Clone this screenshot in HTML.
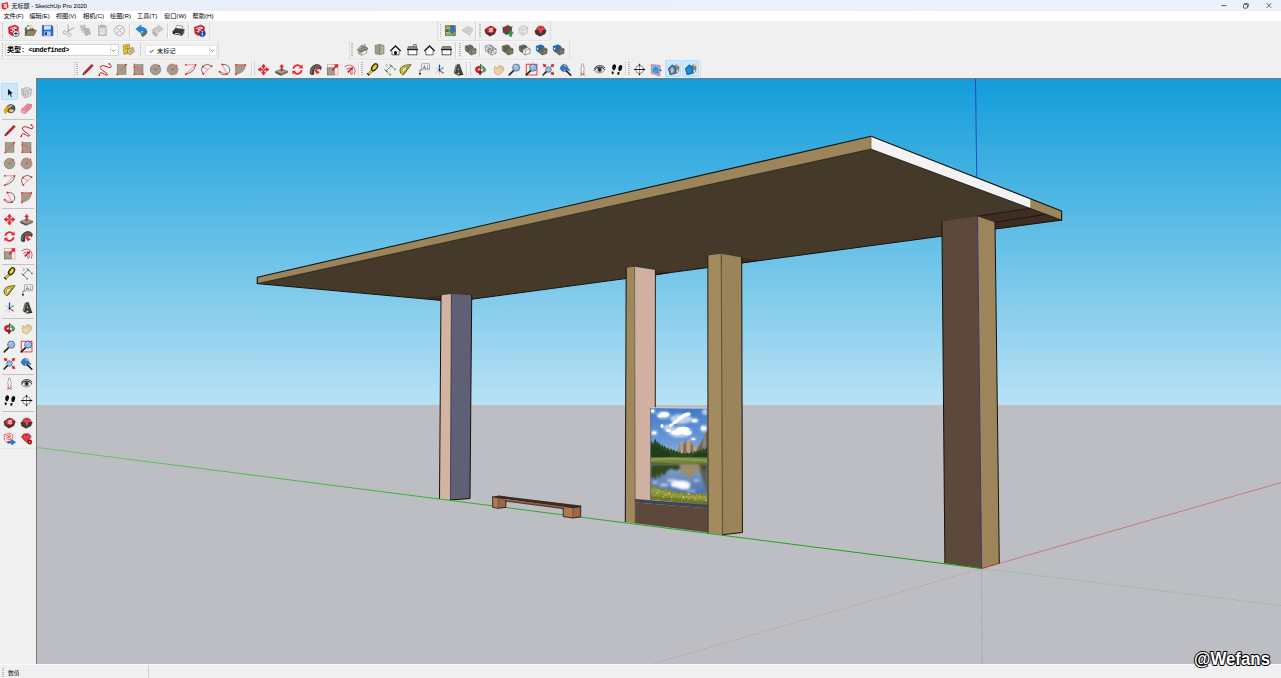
<!DOCTYPE html>
<html lang="zh-CN"><head><meta charset="utf-8"><title>无标题 - SketchUp Pro 2020</title>
<style>
html,body{margin:0;padding:0;}
body{width:1281px;height:678px;overflow:hidden;position:relative;background:#f0f0f0;font-family:"Liberation Sans","Noto Sans CJK SC",sans-serif;color:#000;}
#title{position:absolute;left:0;top:0;width:1281px;height:11px;background:linear-gradient(90deg,#e8eff8,#ecf2fa);}
#title .t{position:absolute;left:11.6px;top:2px;font-size:6px;line-height:8px;white-space:nowrap;color:#000;}
#menu{position:absolute;left:0;top:11px;width:1281px;height:9.5px;background:#fff;}
#menu span{position:absolute;top:1.1px;font-size:6.2px;line-height:8px;white-space:nowrap;color:#000;}
#tb{position:absolute;left:0;top:20.5px;width:1281px;height:57.5px;background:#f0f0f0;}
.ic{position:absolute;overflow:visible;}
.vsep{position:absolute;width:1px;background:#d4d4d4;box-shadow:1px 0 0 #fafafa;}
.hsep{position:absolute;height:1px;background:#c2c2c2;}
.hdl{position:absolute;width:1.5px;background-image:linear-gradient(#b8b8b8 50%,transparent 50%);background-size:1.5px 2px;}
.hl{position:absolute;background:#cce8ff;border:0.5px solid #b5dcfb;box-sizing:border-box;border-radius:1px;}
.combo{position:absolute;background:#fff;border:0.5px solid #d5d5d5;box-sizing:border-box;}
.combo.c2{border-color:#e6e6e6;}
.combo .cbt{position:absolute;left:2px;top:1.2px;font-size:6.2px;line-height:8px;white-space:nowrap;}
.combo .cbt.b{font-weight:bold;font-size:7px;left:1.1px;top:1.3px;}
.combo .mono{font-family:"Liberation Mono",monospace;font-size:6.7px;font-weight:bold;letter-spacing:-0.33px;}
.cdv{position:absolute;right:7.6px;top:0;width:0.5px;height:100%;background:#e2e2e2;}
.combo .arr{position:absolute;right:1.6px;top:3.9px;}
.tbline{position:absolute;background:#e3e3e3;height:1px;box-shadow:0 1px 0 #f8f8f8;}
.tbv{position:absolute;background:#dedede;width:1px;}
#vp{position:absolute;left:35.5px;top:78.2px;width:1246px;height:585.6px;background:#7a7a7a;overflow:hidden;}
#vp svg{position:absolute;left:1.1px;top:0.7px;}
#lt{position:absolute;left:0;top:78px;width:36px;height:586px;background:#f0f0f0;}
#status{position:absolute;left:0;top:664px;width:1281px;height:14px;background:#f0f0f0;border-top:1px solid #fafafa;box-sizing:border-box;}
#status .v{position:absolute;left:8px;top:4px;font-size:5.8px;line-height:8px;color:#111;white-space:nowrap;}
#wm{position:absolute;left:1190px;top:645px;width:84px;height:24px;}
.wc{position:absolute;top:2.8px;}
</style></head><body>
<div id="title"><svg style="position:absolute;left:1px;top:1.5px" width="8" height="8" viewBox="0 0 8 8"><path d="M0.5,1.2 L6.8,0.3 L7.6,5.6 L3.2,7.7 L0.8,6.4 Z" fill="#e02b2b"/><path d="M2.2,2.6 L5.4,2 L5.5,3.4 L3.2,3.9 L5.7,4.5 L5.6,5.6 L2.6,5" fill="none" stroke="#fff" stroke-width="0.8"/></svg><span class="t">无标题 - SketchUp Pro 2020</span>
<svg class="wc" style="left:1220.5px" width="6" height="6" viewBox="0 0 6 6"><path d="M0.3,2.6 H5.4" stroke="#222" stroke-width="0.7"/></svg>
<svg class="wc" style="left:1243px" width="6" height="6" viewBox="0 0 6 6"><rect x="0.5" y="1.3" width="3.9" height="3.9" rx="0.8" fill="none" stroke="#222" stroke-width="0.7"/><path d="M1.6,1.2 V0.9 Q1.6,0.4 2.2,0.4 H4.6 Q5.3,0.4 5.3,1 V3.5 Q5.3,4.1 4.7,4.1" fill="none" stroke="#222" stroke-width="0.7"/></svg>
<svg class="wc" style="left:1266px" width="6" height="6" viewBox="0 0 6 6"><path d="M0.6,0.2 L5.2,4.8 M5.2,0.2 L0.6,4.8" stroke="#222" stroke-width="0.7"/></svg>
</div>
<div id="menu"><span style="left:3.4px">文件(F)</span><span style="left:29.2px">编辑(E)</span><span style="left:55.8px">视图(V)</span><span style="left:83px">相机(C)</span><span style="left:110px">绘图(R)</span><span style="left:137px">工具(T)</span><span style="left:164px">窗口(W)</span><span style="left:192.6px">帮助(H)</span></div>
<div id="tb"></div>
<div class="tbline" style="left:0;top:40px;width:209px"></div><div class="tbv" style="left:208.6px;top:21px;height:19px"></div><div class="tbline" style="left:437px;top:40px;width:113px"></div><div class="tbv" style="left:437px;top:21px;height:19px"></div><div class="tbv" style="left:550px;top:21px;height:19px"></div><div class="tbv" style="left:349px;top:41px;height:18px"></div><div class="tbv" style="left:568.5px;top:41px;height:18px"></div><div class="tbv" style="left:217.5px;top:41px;height:18px"></div><div class="tbv" style="left:74px;top:60px;height:18px"></div><div class="tbv" style="left:699.5px;top:60px;height:18px"></div>
<div class="tbline" style="left:0;top:59px;width:218px"></div><div class="tbline" style="left:349px;top:59px;width:220px"></div>
<div id="lt"><div style="position:absolute;left:0;top:370px;width:35.5px;height:1px;background:#e4e4e4"></div></div>
<div id="vp"><svg width="1244" height="585" viewBox="37 79 1244 585" shape-rendering="geometricPrecision"><defs><linearGradient id="sky" x1="0" y1="79" x2="0" y2="405" gradientUnits="userSpaceOnUse"><stop offset="0" stop-color="#129dda"/><stop offset="1" stop-color="#b9e2f4"/></linearGradient></defs><rect x="37" y="79" width="1244" height="326" fill="url(#sky)"/><rect x="37" y="405" width="1244" height="260" fill="#bdbec3"/><line x1="981.7" y1="568.5" x2="654" y2="663.5" stroke="#c86464" stroke-width="0.8" stroke-linecap="round" stroke-dasharray="0.1 2.1" opacity="0.7"/><line x1="981.7" y1="568.5" x2="1281" y2="605.6" stroke="#3aa83a" stroke-width="0.8" stroke-linecap="round" stroke-dasharray="0.1 2.1" opacity="0.6"/><line x1="981.7" y1="568.5" x2="981.8" y2="664" stroke="#6464d0" stroke-width="0.8" stroke-linecap="round" stroke-dasharray="0.1 2.1" opacity="0.7"/><line x1="981.7" y1="568.5" x2="1281" y2="482.6" stroke="#cc5a5a" stroke-width="0.8" stroke-linecap="round" opacity="0.85"/><line x1="976.75" y1="176.5" x2="975.5" y2="79" stroke="#2a3cc8" stroke-width="0.9" stroke-linecap="round" /><polygon points="257.3,283.6 871,149.1 1061.6,220.1 454,301.6" fill="#45392a" /><polygon points="977.5,216.2 1030.5,208.3 1061.6,220.1 995,229 995,222.3" fill="#3f2c22" /><polygon points="655.4,269.9 671.5,272.7 655.4,275.5" fill="#3f2c22" /><polygon points="741.7,257.7 760.5,260.5 741.7,263.5" fill="#3f2c22" /><polygon points="441.2,295.5 423.5,298.2 441.2,300.6" fill="#3f2c22" /><polygon points="257.3,277.3 871,136.3 871,149.1 257.3,283.6" fill="#9d855b" /><polygon points="871,136.3 1030.5,198.9 1030.5,208.2 871,149.1" fill="#f3f3f3" /><polygon points="1030.5,198.9 1061.6,210.9 1061.6,220.1 1030.5,208.2" fill="#9d855b" /><polyline points="257.3,283.6 257.3,277.3 871,136.3 1061.6,210.9 1061.6,220.1" fill="none" stroke="#17110a" stroke-width="1.1" stroke-linejoin="round" stroke-linecap="round" /><polyline points="257.3,283.6 454,301.6 1061.6,220.1" fill="none" stroke="#17110a" stroke-width="1.0" stroke-linejoin="round" stroke-linecap="round" /><line x1="257.3" y1="283.6" x2="871" y2="149.1" stroke="#17110a" stroke-width="0.7" stroke-linecap="round" /><line x1="871" y1="149.1" x2="1061.6" y2="220.1" stroke="#17110a" stroke-width="0.7" stroke-linecap="round" /><line x1="871" y1="136.3" x2="871" y2="149.1" stroke="#6a5a3c" stroke-width="0.7" stroke-linecap="round" /><line x1="995" y1="222.3" x2="1046" y2="214.4" stroke="#17110a" stroke-width="0.8" stroke-linecap="round" /><line x1="977.5" y1="216.2" x2="1030.5" y2="208.3" stroke="#17110a" stroke-width="0.8" stroke-linecap="round" /><polygon points="441,295.3 451.4,293.9 450.4,500 439.5,498.7" fill="#d3b4a3" /><polygon points="451.4,293.9 471.7,295.3 470,498.5 450.4,500" fill="#5f6076" /><polyline points="441,295.3 439.5,498.7" fill="none" stroke="#17110a" stroke-width="1" stroke-linejoin="round" stroke-linecap="round" /><polyline points="471.7,295.3 470,498.5 450.4,500" fill="none" stroke="#17110a" stroke-width="1" stroke-linejoin="round" stroke-linecap="round" /><line x1="451.4" y1="293.9" x2="450.4" y2="500" stroke="#2a2a36" stroke-width="0.7" stroke-linecap="round" /><polygon points="626.2,267.8 634.6,266.7 635.2,523.3 625.3,522" fill="#a0885d" /><polygon points="634.6,266.7 655.4,269.9 655.3,526 635.2,523.3" fill="#d0b1a1" /><polyline points="626.2,267.8 625.3,522" fill="none" stroke="#17110a" stroke-width="1" stroke-linejoin="round" stroke-linecap="round" /><line x1="655.4" y1="269.9" x2="655.3" y2="408" stroke="#17110a" stroke-width="0.9" stroke-linecap="round" /><line x1="634.6" y1="266.7" x2="635.2" y2="523.3" stroke="#5c4c30" stroke-width="0.7" stroke-linecap="round" /><clipPath id="pc"><polygon points="650.6,407.9 707.5,408.5 707.5,504.6 650.6,499.6"/></clipPath><linearGradient id="psky" x1="0" y1="0" x2="0" y2="1"><stop offset="0" stop-color="#3f7ac8"/><stop offset="0.6" stop-color="#6a9ad8"/><stop offset="1" stop-color="#a8c6e6"/></linearGradient><linearGradient id="plake" x1="0" y1="0" x2="0" y2="1"><stop offset="0" stop-color="#8aa4c8"/><stop offset="0.45" stop-color="#5f84ba"/><stop offset="1" stop-color="#3a62a2"/></linearGradient><filter id="pb" x="-30%" y="-30%" width="160%" height="160%"><feGaussianBlur stdDeviation="0.9"/></filter><filter id="pb2" x="-20%" y="-20%" width="140%" height="140%"><feGaussianBlur stdDeviation="0.45"/></filter><filter id="pb3" x="-30%" y="-30%" width="160%" height="160%"><feGaussianBlur stdDeviation="1.3"/></filter><g clip-path="url(#pc)"><rect x="650.6" y="407.9" width="56.89999999999998" height="56" fill="url(#psky)"/><g fill="#dfe9f6" opacity="0.75" filter="url(#pb3)"><ellipse cx="663.5" cy="415" rx="7" ry="4"/><ellipse cx="681" cy="419" rx="11" ry="5"/><ellipse cx="680" cy="432" rx="12" ry="5.5"/><ellipse cx="668" cy="428" rx="5" ry="3.5"/><ellipse cx="654" cy="433" rx="3.5" ry="2.4"/><ellipse cx="694.5" cy="420.5" rx="4" ry="2.6"/><ellipse cx="704" cy="428.5" rx="4" ry="3.6"/><ellipse cx="652.5" cy="411" rx="3" ry="2.5"/><ellipse cx="705" cy="412" rx="3" ry="3"/><ellipse cx="693" cy="439" rx="3" ry="1.6"/></g><g fill="#fff" filter="url(#pb2)"><ellipse cx="664.5" cy="414.6" rx="4.6" ry="2.4" transform="rotate(0 664.5 414.6)"/><ellipse cx="660" cy="416" rx="2.5" ry="1.5" transform="rotate(0 660 416)"/><ellipse cx="686.5" cy="414.6" rx="4.2" ry="2" transform="rotate(-12 686.5 414.6)"/><ellipse cx="681" cy="417.8" rx="4.6" ry="2" transform="rotate(-30 681 417.8)"/><ellipse cx="676" cy="421.6" rx="4" ry="1.8" transform="rotate(-30 676 421.6)"/><ellipse cx="671.5" cy="425" rx="2.6" ry="1.6" transform="rotate(-20 671.5 425)"/><ellipse cx="683" cy="429.6" rx="6.5" ry="2.8" transform="rotate(0 683 429.6)"/><ellipse cx="677" cy="432.5" rx="6" ry="2.6" transform="rotate(0 677 432.5)"/><ellipse cx="687" cy="433" rx="4.5" ry="2.2" transform="rotate(0 687 433)"/><ellipse cx="668.5" cy="430.5" rx="2.6" ry="1.5" transform="rotate(0 668.5 430.5)"/><ellipse cx="662" cy="426" rx="1.6" ry="2" transform="rotate(0 662 426)"/><ellipse cx="654.2" cy="432.8" rx="2.2" ry="1.4" transform="rotate(0 654.2 432.8)"/><ellipse cx="694.5" cy="420.4" rx="2.8" ry="1.5" transform="rotate(0 694.5 420.4)"/><ellipse cx="703.5" cy="428.2" rx="2.4" ry="2" transform="rotate(0 703.5 428.2)"/><ellipse cx="652.2" cy="411" rx="2" ry="1.6" transform="rotate(0 652.2 411)"/><ellipse cx="693.5" cy="439.2" rx="2" ry="0.9" transform="rotate(0 693.5 439.2)"/></g><g filter="url(#pb2)"><path d="M662,452 L668,447 L672,449 L677,451.5 L679,447 L680.3,442.5 L681.4,440.6 L682.6,442.5 L683.6,444.5 L685.2,442 L687,440 L688.8,439.2 L690.4,441 L691.6,443.5 L694,445 L696.8,446.8 L698.4,446.4 L701,442.5 L703.4,437.5 L705.6,433 L707.6,430 L707.6,460 L662,460 Z" fill="#948570"/><path d="M681.4,440.6 L682.6,442.5 L683,453 L680.6,453 L680.3,442.5 Z M687,440 L688.8,439.2 L690.4,441 L690,453 L686.4,453 Z M694,445 L696.8,446.8 L696,454 L693,454 Z" fill="#bba285"/><path d="M683.6,444.5 L685.2,442 L686.4,453 L683.4,453 Z M691.6,443.5 L693,454 L690.4,454 Z" fill="#74695a"/><path d="M698.4,446.4 L701,442.5 L703.4,437.5 L705.6,433 L707.6,430 L707.6,460 L697,460 Z" fill="#6b695c"/><path d="M703.4,437.5 L705.6,433 L706.4,445 L704,452 L702.4,446 Z" fill="#8a8674"/><path d="M662,452 L668,447 L672,449 L677,451.5 L678,456 L662,456 Z" fill="#8a9490" opacity="0.85"/><path d="M650.6,443 L651.6,440.5 L652.6,444 L653.8,441.8 L655.4,438.4 L656.8,443 L657.8,441 L658.8,444.5 L659.8,442.6 L661,446.5 L662.4,444 L663.6,447.6 L665,445.4 L666.4,449 L668,447.4 L669.4,450.4 L671,448.6 L672.4,451 L674,449.4 L675.6,452 L677,450.4 L678.6,453 L680,451.6 L681.6,454 L683,452.4 L685,454 L687,452.2 L689,454 L691,451.8 L693,453.4 L694.6,450.6 L696,452.4 L697.6,449.4 L699,451.6 L700.6,448.4 L702,451 L703.6,448 L705,450 L706.4,447 L707.6,449 L707.6,461 L650.6,461 Z" fill="#2c4824"/><path d="M650.6,446 L653,444.6 L656,446.6 L659,446 L662,449.4 L666,451 L670,453 L670,459 L650.6,459 Z" fill="#1f381a" opacity="0.75"/><path d="M694,455 L698,452.6 L702,454 L707.6,452 L707.6,459 L694,459 Z" fill="#203a1a" opacity="0.7"/><rect x="650.6" y="457.3" width="56.89999999999998" height="7" fill="#738540"/><path d="M650.6,458.6 L670,457.6 L690,458.6 L707.6,459.4 L707.6,461.4 L690,460.4 L670,459.8 L650.6,461 Z" fill="#8fa050" opacity="0.85"/><path d="M650.6,462 L660,462.6 L672,463.8 L690,464.2 L707.6,463.2 L707.6,465.4 L650.6,465.4 Z" fill="#66623a" opacity="0.8"/></g><rect x="650.6" y="464.6" width="56.89999999999998" height="42" fill="url(#plake)"/><g filter="url(#pb)"><path d="M650.6,464.6 L707.6,464.6 L707.6,470 L700,471.5 L694,469.5 L687,470 L681,468.6 L676,470.5 L671,468.6 L666.5,471.5 L664,476.5 L661.6,472.4 L659.6,479.4 L657.4,474 L655.4,481 L653.4,476.4 L650.6,479 Z" fill="#33471e"/><path d="M679.6,465 L698,465 L702,468.6 L699,471.6 L696,470.6 L693.6,474.6 L691,477.6 L689.2,479 L687.6,475.4 L685.6,472.6 L684,474 L682.6,476.6 L681.4,472 L680.4,468.6 Z" fill="#a08c68"/><path d="M699.6,468 L707.6,467 L707.6,494 L705.4,488 L703.4,481 L701.4,475 Z" fill="#5a5644" opacity="0.9"/><ellipse cx="680.5" cy="484.4" rx="10" ry="3.8" fill="#fff" opacity="0.95"/><ellipse cx="684" cy="487" rx="6" ry="2.4" fill="#fff" opacity="0.95"/><ellipse cx="672" cy="480.6" rx="5.4" ry="1.7" fill="#fff" opacity="0.6"/><ellipse cx="664" cy="484.8" rx="4.4" ry="1.6" fill="#fff" opacity="0.6"/><ellipse cx="696.5" cy="480.4" rx="3" ry="1.2" fill="#fff" opacity="0.55"/><ellipse cx="655" cy="482.6" rx="2.6" ry="1.4" fill="#fff" opacity="0.5"/><ellipse cx="691" cy="491" rx="5" ry="1.5" fill="#fff" opacity="0.35"/></g><path d="M650.6,486 L660,487.8 L670,490.2 L682.8,492.8 L695,493.6 L707.6,493.8 L707.6,506 L650.6,506 Z" fill="#7f8a30" filter="url(#pb2)"/><path d="M650.6,488.6 L660,490.4 L672,493 L686,495.4 L700,496 L707.6,496 L707.6,499.5 L690,498.6 L672,496.4 L650.6,492.5 Z" fill="#9ea040" opacity="0.7" filter="url(#pb2)"/><g fill="#eef0d4" opacity="0.85"><circle cx="669.1" cy="492.6" r="0.51"/><circle cx="655.1" cy="495.2" r="0.42"/><circle cx="654.2" cy="494.8" r="0.31"/><circle cx="675.3" cy="492.9" r="0.33"/><circle cx="674.8" cy="499.7" r="0.34"/><circle cx="663.5" cy="497.1" r="0.60"/><circle cx="683.3" cy="496.8" r="0.61"/><circle cx="653.6" cy="499.4" r="0.39"/><circle cx="659.1" cy="490.5" r="0.40"/><circle cx="696.7" cy="495.2" r="0.49"/><circle cx="686.8" cy="496.6" r="0.48"/><circle cx="654.5" cy="488.9" r="0.37"/><circle cx="689.1" cy="497.0" r="0.40"/><circle cx="683.8" cy="497.2" r="0.40"/><circle cx="695.5" cy="499.0" r="0.38"/><circle cx="683.2" cy="497.7" r="0.58"/><circle cx="691.8" cy="496.0" r="0.61"/><circle cx="657.6" cy="494.0" r="0.54"/><circle cx="659.5" cy="495.1" r="0.31"/><circle cx="688.4" cy="499.5" r="0.48"/><circle cx="700.0" cy="496.2" r="0.52"/><circle cx="684.3" cy="498.1" r="0.45"/><circle cx="698.0" cy="500.9" r="0.45"/><circle cx="688.2" cy="494.3" r="0.52"/><circle cx="687.2" cy="501.2" r="0.56"/><circle cx="666.9" cy="494.7" r="0.51"/><circle cx="652.3" cy="494.0" r="0.35"/><circle cx="657.6" cy="489.5" r="0.55"/><circle cx="658.2" cy="491.9" r="0.43"/><circle cx="699.8" cy="494.4" r="0.44"/><circle cx="681.8" cy="500.4" r="0.56"/><circle cx="699.4" cy="495.9" r="0.43"/><circle cx="671.1" cy="500.2" r="0.61"/><circle cx="659.5" cy="491.2" r="0.37"/><circle cx="664.1" cy="495.5" r="0.49"/><circle cx="665.7" cy="490.4" r="0.43"/><circle cx="671.7" cy="497.1" r="0.60"/><circle cx="689.7" cy="497.7" r="0.50"/><circle cx="688.9" cy="494.2" r="0.59"/><circle cx="694.7" cy="500.4" r="0.56"/><circle cx="673.0" cy="495.6" r="0.33"/><circle cx="686.5" cy="494.3" r="0.32"/><circle cx="662.7" cy="491.6" r="0.41"/><circle cx="653.9" cy="488.0" r="0.35"/><circle cx="656.7" cy="493.2" r="0.31"/><circle cx="700.0" cy="498.4" r="0.35"/><circle cx="665.1" cy="494.1" r="0.42"/><circle cx="657.9" cy="499.4" r="0.62"/><circle cx="677.1" cy="496.8" r="0.33"/><circle cx="656.7" cy="492.9" r="0.38"/><circle cx="697.4" cy="495.0" r="0.31"/><circle cx="704.3" cy="497.8" r="0.35"/><circle cx="681.4" cy="493.7" r="0.47"/><circle cx="705.8" cy="500.3" r="0.52"/><circle cx="665.6" cy="494.3" r="0.35"/><circle cx="694.2" cy="497.8" r="0.55"/><circle cx="669.5" cy="493.4" r="0.56"/><circle cx="706.2" cy="500.2" r="0.56"/><circle cx="696.8" cy="499.3" r="0.37"/><circle cx="680.0" cy="496.1" r="0.31"/></g><path d="M650.6,496.6 L707.6,501.4 L707.6,506 L650.6,506 Z" fill="#55621f" opacity="0.5"/></g><line x1="650.6" y1="407.59999999999997" x2="707.5" y2="408.2" stroke="#c8c8c8" stroke-width="0.9"/><line x1="650.6" y1="407.9" x2="650.6" y2="499.6" stroke="#3a4660" stroke-width="0.6"/><polygon points="635.2,499.4 707.7,505 707.7,508.2 635.2,502.6" fill="#3c4656" /><polygon points="635.2,502.6 707.7,508.2 707.7,532.6 635.2,523.3" fill="#5d493b" /><line x1="635.2" y1="499.4" x2="707.7" y2="505" stroke="#222a36" stroke-width="0.6" stroke-linecap="round" /><polygon points="707.8,255.6 721.2,253.7 722.5,534.7 708,532.9" fill="#a48b5f" /><polygon points="721.2,253.7 741.7,257.6 742.4,532.5 722.5,534.7" fill="#9b8459" /><polyline points="707.8,255.6 708,532.9" fill="none" stroke="#17110a" stroke-width="0.9" stroke-linejoin="round" stroke-linecap="round" /><polyline points="741.7,257.6 742.4,532.5 722.5,534.7" fill="none" stroke="#17110a" stroke-width="1" stroke-linejoin="round" stroke-linecap="round" /><line x1="721.2" y1="253.7" x2="722.5" y2="534.7" stroke="#4a3c22" stroke-width="0.8" stroke-linecap="round" /><polygon points="941.9,221.5 977.5,216.2 981.6,568.5 944.9,563.2" fill="#5d493b" /><polygon points="977.5,216.2 995,222.5 999.3,563.2 981.6,568.5" fill="#9d855b" /><polyline points="941.9,221.5 944.9,563.2" fill="none" stroke="#17110a" stroke-width="1" stroke-linejoin="round" stroke-linecap="round" /><polyline points="995,222.5 999.3,563.2" fill="none" stroke="#17110a" stroke-width="1" stroke-linejoin="round" stroke-linecap="round" /><line x1="977.5" y1="216.2" x2="981.6" y2="568.5" stroke="#3a2c6a" stroke-width="0.9" stroke-linecap="round" /><line x1="981.6" y1="568.5" x2="999.3" y2="563.2" stroke="#c03030" stroke-width="1" stroke-linecap="round" /><linearGradient id="gax" x1="37" y1="0" x2="982" y2="0" gradientUnits="userSpaceOnUse"><stop offset="0" stop-color="#58c458" stop-opacity="0.85"/><stop offset="0.45" stop-color="#2aab2a"/><stop offset="1" stop-color="#0f9a0f"/></linearGradient><line x1="37" y1="447.5" x2="981.7" y2="568.5" stroke="url(#gax)" stroke-width="0.95" stroke-linecap="round" /><polygon points="492.7,497.2 498.3,498 498.3,508.3 492.7,507.3" fill="#b07852" /><polygon points="498.3,498 505.8,497.6 505.8,507.4 498.3,508.3" fill="#9b6745" /><polygon points="563.2,506.5 572.8,507.8 572.8,518 563.2,516.6" fill="#b07852" /><polygon points="572.8,507.8 580.7,507 580.7,516.9 572.8,518" fill="#9b6745" /><polygon points="492.7,496.6 499,495.6 580.7,505.6 580.7,507.4 572.8,508.2 498.3,498.3 492.7,497.6" fill="#3b2a20" /><polygon points="505.8,499.2 563.2,506.6 563.2,508.6 505.8,501" fill="#8c5c3e" /><polyline points="492.7,496.6 492.7,507.3 498.3,508.3 505.8,507.4 505.8,500.6" fill="none" stroke="#17110a" stroke-width="0.8" stroke-linejoin="round" stroke-linecap="round" /><polyline points="563.2,508 563.2,516.6 572.8,518 580.7,516.9 580.7,505.6" fill="none" stroke="#17110a" stroke-width="0.8" stroke-linejoin="round" stroke-linecap="round" /><line x1="505.8" y1="501.2" x2="563.2" y2="508.6" stroke="#17110a" stroke-width="0.7" stroke-linecap="round" /><line x1="498.3" y1="498.6" x2="498.3" y2="508.3" stroke="#5a3a24" stroke-width="0.6" stroke-linecap="round" /><line x1="572.8" y1="508.4" x2="572.8" y2="518" stroke="#5a3a24" stroke-width="0.6" stroke-linecap="round" /></svg></div>
<div class="hdl" style="left:1.9px;top:23.0px;height:15.5px"></div><svg class="ic" style="left:5.9px;top:23.0px" width="15" height="15" viewBox="0 0 16 16"><path d="M2.6,4.4 L9.6,2 L13.4,4.2 L12.6,10.6 L6.6,13.6 L3,11 Z" fill="#d8202c" stroke="#7a1016" stroke-width="0.4"/><path d="M4.6,6 L9.8,4.4 L11.4,5.4 L6.4,7.2 L11,8.6 L10.6,10.4 L5,9" fill="none" stroke="#fff" stroke-width="1"/><circle cx="10.6" cy="11.2" r="3.3" fill="#fff" stroke="#222" stroke-width="0.7"/><path d="M10.6,9.2 V13.2 M8.6,11.2 H12.6" stroke="#111" stroke-width="0.9"/></svg><svg class="ic" style="left:23.1px;top:23.0px" width="15" height="15" viewBox="0 0 16 16"><path d="M2.4,13.2 V5 H6 L7,6.2 H11.6 V8" fill="#6c6a52" stroke="#33321f" stroke-width="0.5"/><path d="M2.4,13.2 L5,7.8 H14.4 L11.6,13.2 Z" fill="#8e8a68" stroke="#33321f" stroke-width="0.5"/><path d="M4.2,6.8 V3.4 L9.6,2.8 V6.4" fill="#fff" stroke="#888" stroke-width="0.4"/><path d="M4.6,2 L7.4,3.2 L4.6,4.6 Z" fill="#20a030"/><path d="M6.4,5.6 L8.8,4.6 L8.8,6.4 Z" fill="#d8202c"/></svg><svg class="ic" style="left:39.8px;top:23.0px" width="15" height="15" viewBox="0 0 16 16"><path d="M2.4,2.6 H12.4 L13.8,4 V13.6 H2.4 Z" fill="#1c6fd4" stroke="#0c3a80" stroke-width="0.5"/><rect x="4.4" y="2.8" width="7" height="4.2" fill="#f0f4fa"/><rect x="4.6" y="9" width="6.8" height="4.6" fill="#bcd4f0"/><rect x="5.4" y="9.8" width="2" height="3" fill="#0c3a80"/><path d="M5.2,4 H10.6 M5.2,5.4 H10.6" stroke="#9ab" stroke-width="0.4"/></svg><div class="vsep" style="left:56.7px;top:24.0px;height:14.0px"></div><svg class="ic" style="left:61.2px;top:23.0px" width="15" height="15" viewBox="0 0 16 16"><g transform="rotate(28 8 8)"><path d="M4.2,2.4 L9,9.6 M12,2.4 L7.2,9.6" stroke="#a8a8a8" stroke-width="1" fill="none"/><circle cx="5.4" cy="11.8" r="1.8" fill="none" stroke="#a8a8a8" stroke-width="0.9"/><circle cx="10.8" cy="11.8" r="1.8" fill="none" stroke="#a8a8a8" stroke-width="0.9"/></g></svg><svg class="ic" style="left:78.1px;top:23.0px" width="15" height="15" viewBox="0 0 16 16"><path d="M2.6,3 L7.4,2.2 L8.4,7.2 L3.8,8.2 Z" fill="#c8c8c8" stroke="#a8a8a8" stroke-width="0.6"/><path d="M6.4,6.4 L11.6,5.6 L13.4,11.8 L8,13.4 Z" fill="#bcbcbc" stroke="#9a9a9a" stroke-width="0.6"/><path d="M4.4,5 L5.8,4.8 M8.6,9 L11,8.4 M9,10.8 L11.4,10.2" stroke="#909090" stroke-width="0.5"/><path d="M5,8.4 Q5,10.6 7,10.8" fill="none" stroke="#a8a8a8" stroke-width="0.7"/></svg><svg class="ic" style="left:94.5px;top:23.0px" width="15" height="15" viewBox="0 0 16 16"><rect x="3.6" y="3.2" width="8.4" height="10.4" fill="#d4d4d4" stroke="#a8a8a8" stroke-width="0.7"/><rect x="5.8" y="2.2" width="4" height="2" fill="#bcbcbc" stroke="#9a9a9a" stroke-width="0.5"/><rect x="5.2" y="6" width="5.4" height="6.2" fill="#ececec" stroke="#b0b0b0" stroke-width="0.4"/><path d="M6.2,8 H9.4 M6.2,9.6 H9.4" stroke="#aaa" stroke-width="0.4"/></svg><svg class="ic" style="left:112.3px;top:23.0px" width="15" height="15" viewBox="0 0 16 16"><circle cx="8" cy="8" r="5.4" fill="#ececec" stroke="#a8a8a8" stroke-width="0.8"/><path d="M4.4,4.4 L11.6,11.6 M11.6,4.4 L4.4,11.6" stroke="#a8a8a8" stroke-width="0.8"/></svg><div class="vsep" style="left:128.9px;top:24.0px;height:14.0px"></div><svg class="ic" style="left:133.5px;top:23.0px" width="15" height="15" viewBox="0 0 16 16"><path d="M1.8,6.4 L7.6,2 V4.6 Q13.8,4.8 13.8,9.4 Q13.4,12.6 9,14.4 L7.6,11.6 Q10.2,10.8 10,9.2 Q9.6,8 7.6,8.2 V10.8 Z" fill="#1f86e8" stroke="#0e4a96" stroke-width="0.4"/><path d="M9,14.4 L7.6,11.6 Q10.2,10.8 10,9.4 L13.8,9.6 Q13.4,12.6 9,14.4 Z" fill="#6c7a5a" stroke="#3a4630" stroke-width="0.3"/></svg><svg class="ic" style="left:149.8px;top:23.0px" width="15" height="15" viewBox="0 0 16 16"><g transform="translate(16 0) scale(-1 1)"><path d="M1.8,6.4 L7.6,2 V4.6 Q13.8,4.8 13.8,9.4 Q13.4,12.6 9,14.4 L7.6,11.6 Q10.2,10.8 10,9.2 Q9.6,8 7.6,8.2 V10.8 Z" fill="#c8c8c8" stroke="#a8a8a8" stroke-width="0.4"/><path d="M9,14.4 L7.6,11.6 Q10.2,10.8 10,9.4 L13.8,9.6 Q13.4,12.6 9,14.4 Z" fill="#b4b4b4"/></g></svg><div class="vsep" style="left:166.7px;top:24.0px;height:14.0px"></div><svg class="ic" style="left:171.2px;top:23.0px" width="15" height="15" viewBox="0 0 16 16"><path d="M4.4,6.4 L6.4,2.4 L12.4,3.4 L11.6,7 Z" fill="#fff" stroke="#333" stroke-width="0.5"/><path d="M1.8,9 L5,5.6 L14.2,6.8 L12,10.6 Z" fill="#3a3a3a" stroke="#111" stroke-width="0.4"/><path d="M1.8,9 L12,10.6 V13.6 L1.8,11.8 Z" fill="#1c1c1c"/><path d="M12,10.6 L14.2,6.8 V10 L12,13.6 Z" fill="#555"/><path d="M4,10.4 L10.4,11.4 L10.4,12.4 L4,11.4 Z" fill="#e8e8e8"/></svg><div class="vsep" style="left:187.9px;top:24.0px;height:14.0px"></div><svg class="ic" style="left:191.8px;top:23.0px" width="15" height="15" viewBox="0 0 16 16"><path d="M2.6,4.4 L9.6,2 L13.4,4.2 L12.6,10.6 L6.6,13.6 L3,11 Z" fill="#d8202c" stroke="#7a1016" stroke-width="0.4"/><path d="M4.6,6 L9.8,4.4 L11.4,5.4 L6.4,7.2 L11,8.6 L10.6,10.4 L5,9" fill="none" stroke="#fff" stroke-width="1"/><circle cx="11" cy="11.2" r="3.3" fill="#1a50b0" stroke="#0a2a6a" stroke-width="0.5"/><path d="M11,10.6 V13.2" stroke="#fff" stroke-width="1.1"/><circle cx="11" cy="9.2" r="0.7" fill="#fff"/></svg><div class="hdl" style="left:439.5px;top:24.0px;height:14.0px"></div><svg class="ic" style="left:442.5px;top:23.0px" width="15" height="15" viewBox="0 0 16 16"><path d="M2.6,2.8 H13.2 V13.4 H2.6 Z" fill="#7a9a58" stroke="#33421f" stroke-width="0.6"/><path d="M2.6,6.4 H6.6 V2.8 M6.6,6.4 V13.4 M2.6,10 H6.6 M9,13.4 V10.6 H13.2 M4.4,2.8 V6.4 M4.6,10 V13.4" stroke="#d8dc9a" stroke-width="0.6" fill="none"/><rect x="3" y="6.8" width="3.2" height="2.8" fill="#4a6a3a"/><path d="M8.6,3.2 H11.4 V7.4 H13 L10,11.6 L7,7.4 H8.6 Z" fill="#2a7cd8" stroke="#0e3a7a" stroke-width="0.4"/></svg><svg class="ic" style="left:459.5px;top:23.0px" width="15" height="15" viewBox="0 0 16 16"><path d="M2.2,7.4 L8.6,3.4 L14,6.4 L10.8,12.6 Z" fill="#d0d0d0" stroke="#b4b4b4" stroke-width="0.5"/><path d="M2.2,7.4 L10.8,12.6 L11,13.6 L2.4,8.4 Z" fill="#bcbcbc"/></svg><div class="vsep" style="left:475.2px;top:21.5px;height:18.0px"></div><div class="hdl" style="left:479.0px;top:23.5px;height:14.5px"></div><svg class="ic" style="left:482.9px;top:23.0px" width="15" height="15" viewBox="0 0 16 16"><path d="M2,7 L8,3.4 L14.2,6.6 L12.6,11.4 L7.4,14 L2.8,11 Z" fill="#3a3a38" stroke="#111" stroke-width="0.4"/><ellipse cx="8.2" cy="7.4" rx="4.8" ry="3.6" fill="#d8202c" stroke="#7a1016" stroke-width="0.4" transform="rotate(-12 8.2 7.4)"/><path d="M6,6.6 L9.8,5.6 L10.6,6.4 L7,7.6 L10.2,8.4 L9.8,9.6 L6,8.8" fill="none" stroke="#fff" stroke-width="0.8"/></svg><svg class="ic" style="left:499.5px;top:23.0px" width="15" height="15" viewBox="0 0 16 16"><path d="M3,5 L8.2,2.6 L12.6,4.6 L12,10 L7,12.6 L3.4,10.2 Z" fill="#4a4a46" stroke="#111" stroke-width="0.4"/><path d="M4.6,5.8 L8.2,4.4 L10.6,5.6 L7,7 L10.2,7.8 L10,9.4 L5,8.4" fill="none" stroke="#d8202c" stroke-width="0.9"/><path d="M3,5 L2.2,3.6 M12.6,4.6 L13.6,3.2 M8.2,2.6 V1.4" stroke="#555" stroke-width="0.5"/><path d="M11.4,7.6 L14.4,11 H12.6 V14.2 H10.2 V11 H8.4 Z" fill="#20a038" stroke="#0a5a1a" stroke-width="0.4"/></svg><svg class="ic" style="left:516.1px;top:23.0px" width="15" height="15" viewBox="0 0 16 16"><path d="M3,5 L8.2,2.6 L12.6,4.6 L12,10.6 L7,13.4 L3.4,10.8 Z" fill="#d8d8d8" stroke="#b8b8b8" stroke-width="0.5"/><path d="M5,6 L8.4,4.8 L10.4,5.8 L7,7.2 L10,8 L9.8,9.6 L5.2,8.6" fill="none" stroke="#f0f0f0" stroke-width="0.9"/><path d="M3,5 L7.2,7.4 L12.6,4.6 M7.2,7.4 L7,13.4" stroke="#bcbcbc" stroke-width="0.4" fill="none"/></svg><svg class="ic" style="left:533.0px;top:23.0px" width="15" height="15" viewBox="0 0 16 16"><path d="M2,8 L8,5 L14.2,7.6 L12.6,11.8 L7.4,14.2 L2.8,11.6 Z" fill="#3a3a38" stroke="#111" stroke-width="0.4"/><path d="M3.4,6.4 L5.8,3.4 H10.6 L13,6.2 L8.2,11.2 Z" fill="#d8202c" stroke="#7a1016" stroke-width="0.4"/><path d="M3.4,6.4 H13 M5.8,3.4 L7,6.4 L8.2,11.2 L9.6,6.4 L10.6,3.4" fill="none" stroke="#f08a90" stroke-width="0.5"/></svg><div class="hdl" style="left:1.9px;top:42.5px;height:15.0px"></div><div class="combo" style="left:5px;top:44px;width:114px;height:11.5px"><span class="cbt b">类型<span class="mono">: &lt;undefined&gt;</span></span><i class="cdv"></i><svg class="arr" viewBox="0 0 6 4" width="5" height="3.4"><path d="M0.5,0.5 L3,3 L5.5,0.5" fill="none" stroke="#555" stroke-width="0.8"/></svg></div><svg class="ic" style="left:121.4px;top:42.3px" width="15" height="15" viewBox="0 0 16 16"><path d="M2.4,3.4 L8.8,2.2 L9.6,11.6 L3.2,13.2 Z" fill="#e8c828" stroke="#6a5a10" stroke-width="0.5"/><path d="M4,5.4 L7.6,4.8 M4.2,7.4 L7.8,6.8" stroke="#7a6a18" stroke-width="0.6"/><path d="M7,8 L12.6,5.6 L14.2,10.2 L9.4,13.8 L6.8,11.6 Z" fill="#d8c89a" stroke="#5a5030" stroke-width="0.5"/><circle cx="12.2" cy="7.4" r="0.8" fill="#fff" stroke="#444" stroke-width="0.4"/><path d="M8.6,10.2 L11.4,9 M9.2,11.8 L12,10.4" stroke="#7a6a48" stroke-width="0.5"/></svg><div class="hdl" style="left:139.9px;top:43.0px;height:14.0px"></div><div class="combo c2" style="left:144.5px;top:44.6px;width:72px;height:11px"><svg style="position:absolute;left:3.4px;top:3px" viewBox="0 0 6 5" width="5.2" height="4.3"><path d="M0.7,2.6 L2.2,4 L5.3,0.8" fill="none" stroke="#222" stroke-width="1.05"/></svg><span class="cbt" style="left:11.6px">未标记</span><i class="cdv" style="right:6.4px"></i><svg class="arr" style="right:0.8px" viewBox="0 0 6 4" width="5" height="3.4"><path d="M0.5,0.5 L3,3 L5.5,0.5" fill="none" stroke="#555" stroke-width="0.8"/></svg></div><div class="hdl" style="left:351.0px;top:43.0px;height:14.0px"></div><svg class="ic" style="left:354.5px;top:42.3px" width="15" height="15" viewBox="0 0 16 16"><path d="M3.6,9 L3.8,12.4 L7,14.2 L12.4,11.6 L12.4,8 L7,10.4 Z" fill="#f4f4f0" stroke="#444" stroke-width="0.5"/><path d="M7,10.4 V14.2" stroke="#555" stroke-width="0.4"/><path d="M2.2,8.4 L7,3.4 L13.6,6.4 L13.4,7.8 L12.4,8 L7,10.6 L3.6,9.2 Z" fill="#8a887a" stroke="#3a3a34" stroke-width="0.5"/><path d="M2.2,8.4 L7,3.4 L7.6,5 L3.6,9.2 Z" fill="#a8a694"/><path d="M9.6,4 V2.4 L11.2,2.8 V4.8 Z" fill="#f0f0ec" stroke="#444" stroke-width="0.4"/><rect x="4.6" y="10.6" width="1.4" height="2" fill="#777"/></svg><svg class="ic" style="left:371.5px;top:42.3px" width="15" height="15" viewBox="0 0 16 16"><path d="M3.4,3.4 L8.4,2.6 V13.4 L3.4,12.6 Z" fill="#a09e8a" stroke="#5a5a4e" stroke-width="0.5"/><path d="M8.4,2.6 L12.8,3.6 V12.4 L8.4,13.4 Z" fill="#b4b29e" stroke="#5a5a4e" stroke-width="0.5"/><rect x="9.8" y="4.6" width="2" height="2.8" fill="#e0ded0" stroke="#666" stroke-width="0.3"/></svg><svg class="ic" style="left:388.3px;top:42.3px" width="15" height="15" viewBox="0 0 16 16"><path d="M4.2,8 V13.7 H11.8 V8" fill="#fff" stroke="#222" stroke-width="0.7"/><path d="M2.5,9.6 L8,4.3 L13.5,9.6" fill="#fff" stroke="#111" stroke-width="1.4" stroke-linejoin="miter"/><path d="M6.5,13.7 V10.4 Q8,8.6 9.5,10.4 V13.7 Z" fill="#111"/></svg><svg class="ic" style="left:405.2px;top:42.3px" width="15" height="15" viewBox="0 0 16 16"><rect x="9.4" y="2.6" width="2.4" height="3" fill="#fff" stroke="#222" stroke-width="0.6"/><path d="M2.4,8.2 L3.6,4.9 H12.4 L13.6,8.2 Z" fill="#8e8c78" stroke="#333" stroke-width="0.5"/><rect x="3.3" y="8.2" width="9.4" height="5.5" fill="#fff" stroke="#222" stroke-width="0.8"/><path d="M2.4,8.2 H13.6" stroke="#111" stroke-width="1"/></svg><svg class="ic" style="left:422.0px;top:42.3px" width="15" height="15" viewBox="0 0 16 16"><path d="M4.2,8 V13.7 H11.8 V8" fill="#fff" stroke="#222" stroke-width="0.7"/><path d="M2.5,9.6 L8,4.3 L13.5,9.6" fill="#fff" stroke="#111" stroke-width="1.4" stroke-linejoin="miter"/></svg><svg class="ic" style="left:439.3px;top:42.3px" width="15" height="15" viewBox="0 0 16 16"><path d="M2.4,8.2 L3.6,4.9 H12.4 L13.6,8.2 Z" fill="#8e8c78" stroke="#333" stroke-width="0.5"/><rect x="3.3" y="8.2" width="9.4" height="5.5" fill="#fff" stroke="#222" stroke-width="0.8"/><path d="M2.4,8.2 H13.6" stroke="#111" stroke-width="1"/></svg><div class="vsep" style="left:455.4px;top:41.5px;height:17.0px"></div><div class="hdl" style="left:459.0px;top:43.0px;height:14.0px"></div><svg class="ic" style="left:462.5px;top:42.3px" width="15" height="15" viewBox="0 0 16 16"><path d="M2.4,4.4 L7.6,3 L10.4,4.4 L10.2,9.4 L5.2,11 L2.6,9.2 Z" fill="#7c7a68" fill-opacity="1" stroke="#33332c" stroke-width="0.5"/><path d="M2.4,4.4 L5.2,5.8 L10.4,4.4 M5.2,5.8 V11" fill="none" stroke="#33332c" stroke-width="0.4"/><path d="M6,7.4 L11.2,6 L14,7.4 L13.8,12.2 L8.8,13.8 L6.2,12 Z" fill="#8c8a76" fill-opacity="1" stroke="#33332c" stroke-width="0.5"/><path d="M6,7.4 L8.8,8.8 L14,7.4 M8.8,8.8 V13.8" fill="none" stroke="#33332c" stroke-width="0.4"/></svg><div class="vsep" style="left:478.7px;top:43.0px;height:14.0px"></div><svg class="ic" style="left:482.9px;top:42.3px" width="15" height="15" viewBox="0 0 16 16"><path d="M2.4,4.4 L7.6,3 L10.4,4.4 L10.2,9.4 L5.2,11 L2.6,9.2 Z" fill="#fff" fill-opacity="0.2" stroke="#333" stroke-width="0.5"/><path d="M2.4,4.4 L5.2,5.8 L10.4,4.4 M5.2,5.8 V11" fill="none" stroke="#333" stroke-width="0.4"/><path d="M6,7.4 L11.2,6 L14,7.4 L13.8,12.2 L8.8,13.8 L6.2,12 Z" fill="#fff" fill-opacity="0.2" stroke="#333" stroke-width="0.5"/><path d="M6,7.4 L8.8,8.8 L14,7.4 M8.8,8.8 V13.8" fill="none" stroke="#333" stroke-width="0.4"/><path d="M7.6,3 V8 L2.6,9.2 M7.6,8 L10.2,9.4 M11.2,6 V10.8 L6.2,12 M11.2,10.8 L13.8,12.2" fill="none" stroke="#555" stroke-width="0.35"/></svg><svg class="ic" style="left:499.5px;top:42.3px" width="15" height="15" viewBox="0 0 16 16"><path d="M2.4,4.4 L7.6,3 L10.4,4.4 L10.2,9.4 L5.2,11 L2.6,9.2 Z" fill="#74725f" fill-opacity="1" stroke="#33332c" stroke-width="0.5"/><path d="M2.4,4.4 L5.2,5.8 L10.4,4.4 M5.2,5.8 V11" fill="none" stroke="#33332c" stroke-width="0.4"/><path d="M6,7.4 L11.2,6 L14,7.4 L13.8,12.2 L8.8,13.8 L6.2,12 Z" fill="#7e7c68" fill-opacity="1" stroke="#33332c" stroke-width="0.5"/><path d="M6,7.4 L8.8,8.8 L14,7.4 M8.8,8.8 V13.8" fill="none" stroke="#33332c" stroke-width="0.4"/></svg><svg class="ic" style="left:517.0px;top:42.3px" width="15" height="15" viewBox="0 0 16 16"><path d="M2.4,4.4 L7.6,3 L10.4,4.4 L10.2,9.4 L5.2,11 L2.6,9.2 Z" fill="#6e6c5a" fill-opacity="1" stroke="#33332c" stroke-width="0.5"/><path d="M2.4,4.4 L5.2,5.8 L10.4,4.4 M5.2,5.8 V11" fill="none" stroke="#33332c" stroke-width="0.4"/><path d="M6,7.4 L11.2,6 L14,7.4 L13.8,12.2 L8.8,13.8 L6.2,12 Z" fill="#f4f4f0" fill-opacity="1" stroke="#33332c" stroke-width="0.5"/><path d="M6,7.4 L8.8,8.8 L14,7.4 M8.8,8.8 V13.8" fill="none" stroke="#33332c" stroke-width="0.4"/></svg><svg class="ic" style="left:533.9px;top:42.3px" width="15" height="15" viewBox="0 0 16 16"><path d="M2.4,4.4 L7.6,3 L10.4,4.4 L10.2,9.4 L5.2,11 L2.6,9.2 Z" fill="#1f78d0" fill-opacity="1" stroke="#0c3a78" stroke-width="0.5"/><path d="M2.4,4.4 L5.2,5.8 L10.4,4.4 M5.2,5.8 V11" fill="none" stroke="#0c3a78" stroke-width="0.4"/><path d="M6,7.4 L11.2,6 L14,7.4 L13.8,12.2 L8.8,13.8 L6.2,12 Z" fill="#7a7866" fill-opacity="1" stroke="#33332c" stroke-width="0.5"/><path d="M6,7.4 L8.8,8.8 L14,7.4 M8.8,8.8 V13.8" fill="none" stroke="#33332c" stroke-width="0.4"/><rect x="3.2" y="6.2" width="1.4" height="2" fill="#cfe6ff"/></svg><svg class="ic" style="left:551.3px;top:42.3px" width="15" height="15" viewBox="0 0 16 16"><path d="M2.4,4.4 L7.6,3 L10.4,4.4 L10.2,9.4 L5.2,11 L2.6,9.2 Z" fill="#1f78d0" fill-opacity="1" stroke="#0c3a78" stroke-width="0.5"/><path d="M2.4,4.4 L5.2,5.8 L10.4,4.4 M5.2,5.8 V11" fill="none" stroke="#0c3a78" stroke-width="0.4"/><path d="M6,7.4 L11.2,6 L14,7.4 L13.8,12.2 L8.8,13.8 L6.2,12 Z" fill="#7a7866" fill-opacity="1" stroke="#33332c" stroke-width="0.5"/><path d="M6,7.4 L8.8,8.8 L14,7.4 M8.8,8.8 V13.8" fill="none" stroke="#33332c" stroke-width="0.4"/><rect x="3.2" y="6.2" width="1.4" height="2" fill="#fff"/></svg><div class="hdl" style="left:76.0px;top:62.0px;height:14.0px"></div><svg class="ic" style="left:80.3px;top:61.5px" width="15" height="15" viewBox="0 0 16 16"><path d="M3,13.8 L4.2,11 L12,3 L13.6,4.6 L5.8,12.6 Z" fill="#e0202c" stroke="#4a1010" stroke-width="0.45"/><path d="M5.4,10.6 L6.6,11.8 M6.8,9.2 L8,10.4 M8.2,7.8 L9.4,9 M9.6,6.4 L10.8,7.6 M11,5 L12.2,6.2" stroke="#5a0c10" stroke-width="0.4"/><path d="M3,13.8 L4.2,11 L5.8,12.6 Z" fill="#8a8a80" stroke="#333" stroke-width="0.3"/><path d="M3,13.8 L3.5,12.6 L4.2,13.3 Z" fill="#111"/><path d="M12,3 L12.7,2.3 L14.3,3.9 L13.6,4.6 Z" fill="#b03038" stroke="#4a1010" stroke-width="0.3"/></svg><svg class="ic" style="left:96.8px;top:61.5px" width="15" height="15" viewBox="0 0 16 16"><path d="M13.23,1.92 Q15.68,4.16 15.04,5.23 Q14.40,6.29 12.75,5.87 Q11.09,5.44 8.59,4.37 Q6.08,3.31 4.43,4.37 Q2.77,5.44 4.05,7.09 Q5.33,8.75 7.41,10.03 Q9.49,11.31 10.72,12.53 Q11.95,13.76 10.72,13.97 Q9.49,14.19 8.00,13.12 Q6.51,12.05 5.07,11.47 Q3.63,10.88 2.99,12.53 L2.35,14.19" fill="none" stroke="#c8141e" stroke-width="1.05" stroke-linecap="round"/><circle cx="13.23" cy="1.92" r="0.95" fill="#e8232e"/><circle cx="2.35" cy="14.19" r="0.95" fill="#e8232e"/></svg><svg class="ic" style="left:114.0px;top:61.5px" width="15" height="15" viewBox="0 0 16 16"><rect x="3.4" y="2.8" width="9.4" height="10.4" fill="#a29e8a" stroke="#6f6c5c" stroke-width="0.5"/><path d="M3.4,13.2 L12.8,2.8" stroke="#f5505c" stroke-width="0.65"/><circle cx="3.4" cy="13.2" r="0.95" fill="#e8232e"/><circle cx="12.8" cy="2.8" r="0.95" fill="#e8232e"/></svg><svg class="ic" style="left:130.8px;top:61.5px" width="15" height="15" viewBox="0 0 16 16"><rect x="3.4" y="2.8" width="9.4" height="10.4" fill="#a29e8a" stroke="#6f6c5c" stroke-width="0.5"/><path d="M3.4,5.4 Q11.4,5.8 12.6,13.2" fill="none" stroke="#f5505c" stroke-width="0.65"/><path d="M3.4,1.8 V13.2 H12.6" fill="none" stroke="#f5505c" stroke-width="0.6"/><circle cx="3.4" cy="5.4" r="0.85" fill="#e8232e"/><circle cx="3.4" cy="13.2" r="0.85" fill="#e8232e"/><circle cx="12.6" cy="13.2" r="0.85" fill="#e8232e"/><circle cx="3.4" cy="2.2" r="0.6" fill="#e8232e"/></svg><svg class="ic" style="left:148.1px;top:61.5px" width="15" height="15" viewBox="0 0 16 16"><circle cx="8" cy="8" r="5.6" fill="#a29e8a" stroke="#6f6c5c" stroke-width="0.6"/><path d="M8,8 L12,4" stroke="#f5505c" stroke-width="0.7"/><circle cx="8" cy="8" r="0.8" fill="#e8232e"/><circle cx="12" cy="4" r="0.8" fill="#e8232e"/></svg><svg class="ic" style="left:164.9px;top:61.5px" width="15" height="15" viewBox="0 0 16 16"><circle cx="8" cy="8" r="5.8" fill="none" stroke="#e8232e" stroke-width="0.6"/><path d="M8.8,2.4 L13.4,6.2 L12.4,12 L6.6,13.6 L2.4,9.2 L4,3.8 Z" fill="#a29e8a" stroke="#6f6c5c" stroke-width="0.4"/><path d="M8,8 L12.2,3.8" stroke="#f5505c" stroke-width="0.7"/><circle cx="8" cy="8" r="0.8" fill="#e8232e"/><circle cx="12.2" cy="3.8" r="0.8" fill="#e8232e"/></svg><svg class="ic" style="left:182.5px;top:61.5px" width="15" height="15" viewBox="0 0 16 16"><path d="M13.4,3 Q13,10.4 3,13" fill="none" stroke="#333" stroke-width="0.7"/><path d="M3,3 L13.4,3 L3,13" fill="none" stroke="#f5505c" stroke-width="0.65"/><circle cx="3" cy="3" r="1.0" fill="#e8232e"/><circle cx="13.4" cy="3" r="1.0" fill="#e8232e"/><circle cx="3" cy="13" r="1.0" fill="#e8232e"/></svg><svg class="ic" style="left:199.3px;top:61.5px" width="15" height="15" viewBox="0 0 16 16"><path d="M4.6,12.8 Q0.4,7.4 5.4,3.6 Q9.6,1 13.4,4.4" fill="none" stroke="#333" stroke-width="0.7"/><path d="M4.6,12.8 L13.4,4.4 M4.2,5 L9.4,8.4" fill="none" stroke="#f5505c" stroke-width="0.65"/><circle cx="4.6" cy="12.8" r="1.0" fill="#e8232e"/><circle cx="13.4" cy="4.4" r="1.0" fill="#e8232e"/><circle cx="4.2" cy="4.8" r="1.0" fill="#e8232e"/></svg><svg class="ic" style="left:216.8px;top:61.5px" width="15" height="15" viewBox="0 0 16 16"><path d="M5.6,2.6 Q13.2,2.2 13.6,8.4 Q13.4,13 8,13.6 Q4.4,13.6 2.8,10.8" fill="none" stroke="#333" stroke-width="0.7"/><path d="M5.6,2.6 L10.6,12.8 L2.8,10.4" fill="none" stroke="#f5505c" stroke-width="0.65"/><circle cx="5.6" cy="2.6" r="1.0" fill="#e8232e"/><circle cx="10.6" cy="12.8" r="1.0" fill="#e8232e"/><circle cx="2.8" cy="10.4" r="1.0" fill="#e8232e"/></svg><svg class="ic" style="left:233.1px;top:61.5px" width="15" height="15" viewBox="0 0 16 16"><path d="M3,3 L13.2,3 Q13.4,11.4 3,13.2 Z" fill="#a29e8a" stroke="#6f6c5c" stroke-width="0.5"/><path d="M3,3 H13.2 M3,3 V13.2 M3,13.2 L13.2,3" fill="none" stroke="#f5505c" stroke-width="0.6"/><circle cx="3" cy="3" r="0.9" fill="#e8232e"/><circle cx="13.2" cy="3" r="0.9" fill="#e8232e"/><circle cx="3" cy="13.2" r="0.9" fill="#e8232e"/></svg><div class="vsep" style="left:250.5px;top:62.0px;height:14.0px"></div><div class="hdl" style="left:253.5px;top:62.0px;height:14.0px"></div><svg class="ic" style="left:256.2px;top:61.5px" width="15" height="15" viewBox="0 0 16 16"><path d="M8,2 L10.3,5 H8.8 V7.2 H11 V5.7 L14,8 L11,10.3 V8.8 H8.8 V11 H10.3 L8,14 L5.7,11 H7.2 V8.8 H5 V10.3 L2,8 L5,5.7 V7.2 H7.2 V5 H5.7 Z" fill="#e8232e" stroke="#a01018" stroke-width="0.3"/><circle cx="8" cy="8" r="0.8" fill="#d0d0d0"/></svg><svg class="ic" style="left:273.5px;top:61.5px" width="15" height="15" viewBox="0 0 16 16"><path d="M1.4,10 L8.2,7.4 L14.8,9.8 L7.6,12.8 Z" fill="#a29e8a" stroke="#3a3a32" stroke-width="0.45"/><path d="M1.4,10 L7.6,12.8 V14.6 L1.4,11.6 Z" fill="#4c4a3e"/><path d="M7.6,12.8 L14.8,9.8 V11.4 L7.6,14.6 Z" fill="#6e6c5c"/><path d="M8.2,2.4 L10.4,5.4 H9 V9.6 H7.4 V5.4 H6 Z" fill="#e8232e" stroke="#9a1018" stroke-width="0.3"/></svg><svg class="ic" style="left:290.3px;top:61.5px" width="15" height="15" viewBox="0 0 16 16"><path d="M3.5,7.2 A4.6,4.6 0 0 1 11.4,4.9" fill="none" stroke="#e8232e" stroke-width="1.9"/><path d="M9.6,6.6 L13.6,6.8 L13.2,2.6 Z" fill="#e8232e"/><path d="M12.5,8.8 A4.6,4.6 0 0 1 4.6,11.1" fill="none" stroke="#e8232e" stroke-width="1.9"/><path d="M6.4,9.4 L2.4,9.2 L2.8,13.4 Z" fill="#e8232e"/></svg><svg class="ic" style="left:307.5px;top:61.5px" width="15" height="15" viewBox="0 0 16 16"><path d="M2.2,12.4 Q1.4,4.6 8.2,2.6 Q12.6,2 14.4,5.4 L13.6,8.6 Q11.6,5.6 8.6,6.4 Q5.8,7.6 6.4,13 Q4,14.4 2.2,12.4 Z" fill="#45453f" stroke="#1a1a1a" stroke-width="0.4"/><path d="M3.6,11.6 Q3.4,6 8.2,4.4 Q11.4,3.8 13,5.6" fill="none" stroke="#8a8a80" stroke-width="0.9"/><path d="M13,6.6 Q9,6.4 8.2,9.4 Q8.2,10.8 9.6,11" fill="none" stroke="#e8232e" stroke-width="1.7"/><path d="M9,8.8 L12.6,11 L9,13.2 Z" fill="#e8232e"/></svg><svg class="ic" style="left:324.5px;top:61.5px" width="15" height="15" viewBox="0 0 16 16"><rect x="2.4" y="2.4" width="11.4" height="11.4" fill="none" stroke="#f08088" stroke-width="0.6"/><rect x="2.4" y="6.2" width="7.6" height="7.6" fill="#a29e8a" stroke="#55534a" stroke-width="0.5"/><path d="M7.4,9 L11,5.4 L9.8,4.2 L14,2.2 L12,6.4 L10.8,5.2 L8.2,9.8 Z" fill="#e8232e"/><path d="M7.6,8.8 L12,4.4" stroke="#e8232e" stroke-width="1.6"/><path d="M9.6,2.4 H13.8 V6.6 Z" fill="#e8232e"/></svg><svg class="ic" style="left:342.0px;top:61.5px" width="15" height="15" viewBox="0 0 16 16"><path d="M2.6,5.4 Q8.4,1 13,5.8 Q15,9.4 13,13.6" fill="none" stroke="#e8232e" stroke-width="0.8"/><path d="M4.6,8.2 Q6.2,6.4 8,6.8 M10.6,9.8 Q11.2,11.6 10.4,13.4" fill="none" stroke="#333" stroke-width="0.7"/><path d="M5.6,10.4 L9,7.2 L8,6.2 L12,5.4 L11.2,9.4 L10.2,8.4 L6.8,11.6 Z" fill="#e8232e"/><path d="M6.2,11 L10.4,7" stroke="#e8232e" stroke-width="1.3"/><path d="M8.6,9.8 L9.6,13.6" stroke="#555" stroke-width="0.6"/></svg><div class="vsep" style="left:357.8px;top:62.0px;height:14.0px"></div><div class="hdl" style="left:361.0px;top:62.0px;height:14.0px"></div><svg class="ic" style="left:364.8px;top:61.5px" width="15" height="15" viewBox="0 0 16 16"><path d="M2.6,12.4 L7.6,7.6 L9.2,9.2 L4.2,14 Z" fill="#e8d018" stroke="#222" stroke-width="0.5"/><path d="M2.3,12.1 L4.5,14.3" stroke="#111" stroke-width="1.3"/><ellipse cx="10.2" cy="5.6" rx="4.6" ry="2.9" transform="rotate(-52 10.2 5.6)" fill="#3a3a30" stroke="#111" stroke-width="0.5"/><ellipse cx="10.3" cy="5.6" rx="3.3" ry="1.7" transform="rotate(-52 10.3 5.6)" fill="#f0e020" stroke="#6a6410" stroke-width="0.4"/></svg><svg class="ic" style="left:381.5px;top:61.5px" width="15" height="15" viewBox="0 0 16 16"><path d="M4.4,9.4 L9.8,4" stroke="#333" stroke-width="0.6"/><path d="M3,8 L5.8,10.8 M8.4,2.6 L11.2,5.4" stroke="#111" stroke-width="0.9"/><path d="M5,10 L8.6,13.6 M10.4,4.6 L13.8,8" stroke="#444" stroke-width="0.6"/><circle cx="13.8" cy="8" r="0.95" fill="#30c040"/><circle cx="8.8" cy="13.6" r="0.95" fill="#30c040"/><text x="3.6" y="5.4" font-size="4.4" font-family="Liberation Serif, serif" fill="#333">3</text></svg><svg class="ic" style="left:398.0px;top:61.5px" width="15" height="15" viewBox="0 0 16 16"><path d="M13.8,2.8 L5.6,13.8 Q1.8,12.4 2,8.6 Q3,2.8 13.8,2.8 Z" fill="#e6cc1c" stroke="#2a2a10" stroke-width="0.7" stroke-linejoin="round"/><path d="M10.6,5 L6,11.2 Q4.2,10.4 4.4,8.6 Q5,5.4 10.6,5 Z" fill="#e8e8e0" stroke="#4a4610" stroke-width="0.5"/><path d="M13.8,2.8 L5.6,13.8" stroke="#6a6410" stroke-width="0.9"/></svg><svg class="ic" style="left:415.5px;top:61.5px" width="15" height="15" viewBox="0 0 16 16"><rect x="6.2" y="2" width="8.2" height="6.4" fill="#fff" stroke="#555" stroke-width="0.5"/><text x="7" y="7.3" font-size="5.4" font-family="Liberation Serif, serif" fill="#111">A1</text><path d="M6.2,8.4 H4.2 V12.2" fill="none" stroke="#333" stroke-width="0.6"/><path d="M4.2,14.4 L3,11.6 H5.4 Z" fill="#111"/></svg><svg class="ic" style="left:432.0px;top:61.5px" width="15" height="15" viewBox="0 0 16 16"><path d="M8,3 V9" stroke="#a8c8f0" stroke-width="2.2"/><path d="M8,2.8 V9" stroke="#1a48d0" stroke-width="1.1"/><path d="M8,9 V13.6" stroke="#a8c8f0" stroke-width="1.6" opacity="0.7"/><path d="M8,9 L11.6,11.4" stroke="#d82020" stroke-width="1"/><path d="M12.8,12.2 L10.4,11.8 L11.6,10.2 Z" fill="#d82020"/><path d="M8,9 L11.6,6.4" stroke="#20a030" stroke-width="1"/><path d="M12.8,5.6 L11.6,7.6 L10.4,6 Z" fill="#20a030"/><path d="M8,9 L3.6,12" stroke="#20a030" stroke-width="0.5" stroke-dasharray="0.8 0.6"/><path d="M8,9 L3.6,6" stroke="#d82020" stroke-width="0.5" stroke-dasharray="0.8 0.6"/><circle cx="8" cy="9" r="0.9" fill="#222"/></svg><svg class="ic" style="left:449.5px;top:61.5px" width="15" height="15" viewBox="0 0 16 16"><path d="M5.2,12.4 L7.4,2.8 L10,2.4 L13,11 L13.8,12.8 L10.6,13.8 L9.8,11.2 L8,11.4 L7.6,13.4 Z" fill="#45443c" stroke="#1a1a18" stroke-width="0.4"/><path d="M5.2,12.4 L3.8,11.4 L6,3.2 L7.4,2.8 Z" fill="#7a7866"/><path d="M8.2,8.6 L9.4,8.4 L8.8,6 Z" fill="#d8d8cc"/><path d="M7.6,4.6 L8.8,4 L9.4,5.4 Z" fill="#8a8878"/><path d="M7.6,13.4 L13.8,12.8 L14.4,13.6 L8.2,14.6 Z" fill="#22221e"/></svg><div class="vsep" style="left:466.2px;top:62.0px;height:14.0px"></div><div class="hdl" style="left:469.5px;top:62.0px;height:14.0px"></div><svg class="ic" style="left:472.5px;top:61.5px" width="15" height="15" viewBox="0 0 16 16"><path d="M8,2.2 V14" stroke="#222" stroke-width="0.7"/><path d="M8,4.2 Q2.2,4.4 2.4,8 Q2.8,11.4 6.8,11.8 L6.8,13.6 L10,10.8 L6.8,8.2 L6.8,9.8 Q4.8,9.4 4.8,8 Q5,6.6 8,6.4 Z" fill="#d8202c" stroke="#7a1016" stroke-width="0.4"/><path d="M3.4,9.6 Q4.4,11.4 6.8,11.8 L6.8,13.6 L10,10.8 L8.6,9.8 Q6,10.6 3.4,9.6 Z" fill="#9a1420"/><path d="M8,2.6 L11.2,5 L8,7.4 V6 Q11,6.4 11.2,8 Q11,9.2 9.8,9.6 L11.4,11 Q13.8,10 13.6,8 Q13.2,4.8 8,4.2 Z" fill="#38b058" stroke="#0f5a22" stroke-width="0.4"/></svg><svg class="ic" style="left:490.5px;top:61.5px" width="15" height="15" viewBox="0 0 16 16"><g transform="rotate(28 8 8) translate(0.4 0.6) scale(0.92)"><path d="M3.4,9.2 Q2.2,7.6 3.6,6.6 L6.2,8 L6.6,3.8 Q7.6,2.6 8.4,3.8 L8.8,2.8 Q10,2 10.6,3.4 L11.2,3 Q12.6,2.8 12.6,4.4 Q14,4.4 13.8,6 L13.2,10 Q12.6,12.6 10.6,13.8 H6.4 Q4.8,11.6 3.4,9.2 Z" fill="#ecd4a4" stroke="#b09060" stroke-width="0.55"/><path d="M8.4,3.8 V7.4 M10.6,3.4 V7.4 M12.6,4.4 V7.8" stroke="#c0a070" stroke-width="0.45"/></g></svg><svg class="ic" style="left:507.1px;top:61.5px" width="15" height="15" viewBox="0 0 16 16"><path d="M2.4,13.8 L7,9.2" stroke="#222" stroke-width="1.7" stroke-linecap="round"/><circle cx="9.8" cy="6" r="3.8" fill="#8fbce8" stroke="#4a5a6c" stroke-width="0.8"/><path d="M7.2,5.4 Q8,3.6 10,3.6" fill="none" stroke="#dff0ff" stroke-width="0.8"/></svg><svg class="ic" style="left:524.3px;top:61.5px" width="15" height="15" viewBox="0 0 16 16"><rect x="2.4" y="2.4" width="11.4" height="11.4" fill="none" stroke="#f02834" stroke-width="0.95"/><path d="M2.4,13.8 L7,9.2" stroke="#222" stroke-width="1.7" stroke-linecap="round"/><circle cx="9.8" cy="6" r="3.8" fill="#8fbce8" stroke="#4a5a6c" stroke-width="0.8"/><path d="M7.2,5.4 Q8,3.6 10,3.6" fill="none" stroke="#dff0ff" stroke-width="0.8"/></svg><svg class="ic" style="left:541.3px;top:61.5px" width="15" height="15" viewBox="0 0 16 16"><path d="M1.8,1.8 L6.2,3 L3,6.2 Z M14.2,1.8 L13,6.2 L9.8,3 Z M14.2,14.2 L9.8,13 L13,9.8 Z M5.4,9.2 L6.8,10.6 L3.6,12.6 Z" fill="#e8232e"/><path d="M12.4,3.6 L10,6 M3.6,3.6 L6,6 M12.4,12.4 L10,10" stroke="#444" stroke-width="0.8"/><path d="M2.2,13.8 L6,10" stroke="#222" stroke-width="1.6" stroke-linecap="round"/><circle cx="8" cy="8" r="3" fill="#8fbce8" stroke="#4a5a6c" stroke-width="0.7"/></svg><svg class="ic" style="left:557.9px;top:61.5px" width="15" height="15" viewBox="0 0 16 16"><circle cx="6.6" cy="6.4" r="3.8" fill="#9ac4ea" stroke="#555" stroke-width="0.7"/><path d="M8.8,9.4 L13.6,14" stroke="#222" stroke-width="1.7" stroke-linecap="round"/><path d="M2,6.6 L6,3 V5 Q11.4,4.6 12.8,9.8 Q10.6,7.4 6,8 V10 Z" fill="#2a78d8" stroke="#124a9a" stroke-width="0.4"/></svg><svg class="ic" style="left:574.9px;top:61.5px" width="15" height="15" viewBox="0 0 16 16"><path d="M5.4,11.8 L10.6,14.6 M10.6,11.8 L5.4,14.6" stroke="#e8232e" stroke-width="0.7"/><path d="M8,1.6 Q9.2,2 8.8,3.6 Q10.4,6.8 9.4,9.8 L9,13 H7 L6.6,9.8 Q5.6,6.8 7.2,3.6 Q6.8,2 8,1.6 Z" fill="#fff" stroke="#555" stroke-width="0.55"/></svg><svg class="ic" style="left:591.5px;top:61.5px" width="15" height="15" viewBox="0 0 16 16"><path d="M2.4,8.8 Q5,5.2 8.6,5.4 Q12,5.8 13.8,8.4 Q11.4,11.4 7.8,11.2 Q4.4,10.8 2.4,8.8 Z" fill="#f4f4f4" stroke="#333" stroke-width="0.5"/><circle cx="8.2" cy="8.2" r="2.4" fill="#606060"/><circle cx="8.2" cy="8.2" r="1.2" fill="#111"/><path d="M2.2,7 Q5.2,3.4 9,3.8 Q12.4,4.2 14,6.6" fill="none" stroke="#222" stroke-width="1"/><path d="M2.4,8.8 Q5,5.6 8.6,5.4 Q12,5.8 13.8,8.4" fill="none" stroke="#111" stroke-width="0.8"/><path d="M3.6,11 Q7.4,13 11.6,11.2" fill="none" stroke="#999" stroke-width="0.5"/></svg><svg class="ic" style="left:608.5px;top:61.5px" width="15" height="15" viewBox="0 0 16 16"><g transform="rotate(14 5 8)"><path d="M2.8,6 Q2.4,2.6 4.6,2.4 Q7,2.6 6.8,6 Q6.6,8.6 5.2,9 Q3.2,8.8 2.8,6 Z M3.6,10.2 Q5.8,9.8 6,11 Q6,13.2 4.8,13.4 Q3.4,13 3.6,10.2 Z" fill="#111"/></g><g transform="rotate(18 11 8) translate(6.6 0.6)"><path d="M2.8,6 Q2.4,2.6 4.6,2.4 Q7,2.6 6.8,6 Q6.6,8.6 5.2,9 Q3.2,8.8 2.8,6 Z M3.6,10.2 Q5.8,9.8 6,11 Q6,13.2 4.8,13.4 Q3.4,13 3.6,10.2 Z" fill="#111"/></g></svg><div class="vsep" style="left:625.1px;top:62.0px;height:14.0px"></div><div class="hdl" style="left:628.0px;top:62.0px;height:14.0px"></div><div class="hl" style="left:664.8px;top:60.1px;width:16.5px;height:16.6px"></div><div class="hl" style="left:681.8px;top:60.1px;width:17px;height:16.6px"></div><svg class="ic" style="left:631.5px;top:61.5px" width="15" height="15" viewBox="0 0 16 16"><circle cx="8" cy="8" r="4.2" fill="#fff" stroke="#333" stroke-width="0.6"/><path d="M2,8 H13" stroke="#111" stroke-width="1"/><path d="M8,2.6 V13.4" stroke="#333" stroke-width="0.5"/><path d="M8,1.6 L9.2,3.6 H6.8 Z M8,14.4 L6.8,12.4 H9.2 Z M14.6,8 L12.2,9.4 V6.6 Z" fill="#111"/></svg><svg class="ic" style="left:649.2px;top:61.5px" width="15" height="15" viewBox="0 0 16 16"><path d="M2.4,2.6 L11.8,3.8 L11.5,15.2 L2.6,12 Z" fill="#7ab8ea" stroke="#f06a78" stroke-width="0.8"/><path d="M4,8 L7,4.8 L10,7.4 L9.8,12.4 L4.4,10.6 Z" fill="#3a8ad0"/><path d="M5.6,8.4 L8.4,8.8 L8.4,11 L5.6,10.2 Z" fill="#5aa2e0"/><path d="M13.6,8.8 L11.8,7.8 V9.8 Z" fill="#222"/></svg><svg class="ic" style="left:666.2px;top:61.5px" width="15" height="15" viewBox="0 0 16 16"><path d="M8.6,4.2 L11.6,2.6 L14,5 L13.6,10 L10,12.4 Z" fill="#8c8874" stroke="#4a483c" stroke-width="0.4"/><path d="M10.6,3.2 L12,2.4 L12.8,3.2 L12.6,5 Z" fill="#c8c6b8"/><rect x="11.4" y="9" width="1.6" height="2" fill="#f0f0f0" transform="skewY(-20) translate(0,4.2)"/><path d="M2.6,7.4 L6.6,3.2 L10,6.4 L9.6,12.2 L4.6,13.4 Z" fill="#8a8a86" stroke="#0c5aa8" stroke-width="1.1" stroke-linejoin="round"/><path d="M5,8 L6.6,6 L8,7.6 L7.8,10.8 L5.6,11.4 Z" fill="#c4c4c0"/></svg><svg class="ic" style="left:683.2px;top:61.5px" width="15" height="15" viewBox="0 0 16 16"><path d="M8.6,4.2 L11.6,2.6 L14,5 L13.6,10 L10,12.4 Z" fill="#8c8874" stroke="#4a483c" stroke-width="0.4"/><path d="M10.6,3.2 L12,2.4 L12.8,3.2 L12.6,5 Z" fill="#c8c6b8"/><rect x="11.4" y="9" width="1.6" height="2" fill="#f0f0f0" transform="skewY(-20) translate(0,4.2)"/><path d="M2.6,7.4 L6.6,3.2 L10,6.4 L9.6,12.2 L4.6,13.4 Z" fill="#1a90d8" stroke="#0c5aa8" stroke-width="1.1" stroke-linejoin="round"/></svg><div class="hl" style="left:1px;top:83.3px;width:17px;height:16.7px"></div><svg class="ic" style="left:2.1px;top:84.8px" width="15" height="15" viewBox="0 0 16 16"><path d="M6.3,3.6 L6.3,11.6 L8.1,9.9 L9.6,13 L10.9,12.4 L9.4,9.4 L11.9,9.2 Z" fill="#000" stroke="#fff" stroke-width="0.45"/></svg><svg class="ic" style="left:19.0px;top:84.8px" width="15" height="15" viewBox="0 0 16 16"><g fill="none" stroke="#a4a4a4" stroke-width="0.7"><path d="M2.5,4.5 L9,2.3 L13.6,4.6 L12.6,11.4 L6.4,13.8 L3.4,11 Z" fill="#dedede"/><path d="M2.5,4.5 L7,7 L13.6,4.6 M7,7 L6.4,13.8 M4.6,5.7 L4.9,12.3 M9.8,6 L9.3,12.6 M3,8 L6.7,10.4 L13,8 M5.7,3.4 L10.2,5.8 "/></g></svg><svg class="ic" style="left:2.1px;top:101.4px" width="15" height="15" viewBox="0 0 16 16"><ellipse cx="9.3" cy="8.2" rx="4.6" ry="4.3" fill="#5a5a50" stroke="#2a2a24" stroke-width="0.6"/><ellipse cx="8.4" cy="5.7" rx="3.2" ry="1.6" fill="#9ab4b8" stroke="#333" stroke-width="0.4" transform="rotate(-18 8.4 5.7)"/><ellipse cx="10" cy="10.4" rx="2.9" ry="1.9" fill="#d9c98a" stroke="#333" stroke-width="0.4"/><path d="M12.5,4.5 Q14,5.5 13,8.5" fill="none" stroke="#333" stroke-width="0.6"/><path d="M2.2,10.5 Q2.2,6.8 6.6,6.1 L9.2,6.6 Q6.2,8 5.6,10.6 Q5.2,12.6 3.6,13.6 Q2.2,12.6 2.2,10.5 Z" fill="#f5a800" stroke="#b87800" stroke-width="0.3"/></svg><svg class="ic" style="left:19.0px;top:101.4px" width="15" height="15" viewBox="0 0 16 16"><path d="M2.4,9.2 L9.2,3 L13.8,4 L12.4,8.2 L6.2,13.4 L2.6,12.2 Z" fill="#f48aa8" stroke="#8a4a5a" stroke-width="0.5"/><path d="M2.4,9.2 L6.6,10 L12.8,4.6 M6.6,10 L6.2,13.4" fill="none" stroke="#b85a74" stroke-width="0.5"/><path d="M2.4,9.2 L6.6,10 L6.2,13.4 L2.6,12.2 Z" fill="#f9a4bc"/><path d="M7.6,8.2 L11,5.2" stroke="#d86a88" stroke-width="0.8"/></svg><svg class="ic" style="left:2.1px;top:122.9px" width="15" height="15" viewBox="0 0 16 16"><path d="M3,13.8 L4.2,11 L12,3 L13.6,4.6 L5.8,12.6 Z" fill="#e0202c" stroke="#4a1010" stroke-width="0.45"/><path d="M5.4,10.6 L6.6,11.8 M6.8,9.2 L8,10.4 M8.2,7.8 L9.4,9 M9.6,6.4 L10.8,7.6 M11,5 L12.2,6.2" stroke="#5a0c10" stroke-width="0.4"/><path d="M3,13.8 L4.2,11 L5.8,12.6 Z" fill="#8a8a80" stroke="#333" stroke-width="0.3"/><path d="M3,13.8 L3.5,12.6 L4.2,13.3 Z" fill="#111"/><path d="M12,3 L12.7,2.3 L14.3,3.9 L13.6,4.6 Z" fill="#b03038" stroke="#4a1010" stroke-width="0.3"/></svg><svg class="ic" style="left:19.0px;top:122.9px" width="15" height="15" viewBox="0 0 16 16"><path d="M13.23,1.92 Q15.68,4.16 15.04,5.23 Q14.40,6.29 12.75,5.87 Q11.09,5.44 8.59,4.37 Q6.08,3.31 4.43,4.37 Q2.77,5.44 4.05,7.09 Q5.33,8.75 7.41,10.03 Q9.49,11.31 10.72,12.53 Q11.95,13.76 10.72,13.97 Q9.49,14.19 8.00,13.12 Q6.51,12.05 5.07,11.47 Q3.63,10.88 2.99,12.53 L2.35,14.19" fill="none" stroke="#c8141e" stroke-width="1.05" stroke-linecap="round"/><circle cx="13.23" cy="1.92" r="0.95" fill="#e8232e"/><circle cx="2.35" cy="14.19" r="0.95" fill="#e8232e"/></svg><svg class="ic" style="left:2.1px;top:139.8px" width="15" height="15" viewBox="0 0 16 16"><rect x="3.4" y="2.8" width="9.4" height="10.4" fill="#a29e8a" stroke="#6f6c5c" stroke-width="0.5"/><path d="M3.4,13.2 L12.8,2.8" stroke="#f5505c" stroke-width="0.65"/><circle cx="3.4" cy="13.2" r="0.95" fill="#e8232e"/><circle cx="12.8" cy="2.8" r="0.95" fill="#e8232e"/></svg><svg class="ic" style="left:19.0px;top:139.8px" width="15" height="15" viewBox="0 0 16 16"><rect x="3.4" y="2.8" width="9.4" height="10.4" fill="#a29e8a" stroke="#6f6c5c" stroke-width="0.5"/><path d="M3.4,5.4 Q11.4,5.8 12.6,13.2" fill="none" stroke="#f5505c" stroke-width="0.65"/><path d="M3.4,1.8 V13.2 H12.6" fill="none" stroke="#f5505c" stroke-width="0.6"/><circle cx="3.4" cy="5.4" r="0.85" fill="#e8232e"/><circle cx="3.4" cy="13.2" r="0.85" fill="#e8232e"/><circle cx="12.6" cy="13.2" r="0.85" fill="#e8232e"/><circle cx="3.4" cy="2.2" r="0.6" fill="#e8232e"/></svg><svg class="ic" style="left:2.1px;top:156.3px" width="15" height="15" viewBox="0 0 16 16"><circle cx="8" cy="8" r="5.6" fill="#a29e8a" stroke="#6f6c5c" stroke-width="0.6"/><path d="M8,8 L12,4" stroke="#f5505c" stroke-width="0.7"/><circle cx="8" cy="8" r="0.8" fill="#e8232e"/><circle cx="12" cy="4" r="0.8" fill="#e8232e"/></svg><svg class="ic" style="left:19.0px;top:156.3px" width="15" height="15" viewBox="0 0 16 16"><circle cx="8" cy="8" r="5.8" fill="none" stroke="#e8232e" stroke-width="0.6"/><path d="M8.8,2.4 L13.4,6.2 L12.4,12 L6.6,13.6 L2.4,9.2 L4,3.8 Z" fill="#a29e8a" stroke="#6f6c5c" stroke-width="0.4"/><path d="M8,8 L12.2,3.8" stroke="#f5505c" stroke-width="0.7"/><circle cx="8" cy="8" r="0.8" fill="#e8232e"/><circle cx="12.2" cy="3.8" r="0.8" fill="#e8232e"/></svg><svg class="ic" style="left:2.1px;top:173.4px" width="15" height="15" viewBox="0 0 16 16"><path d="M13.4,3 Q13,10.4 3,13" fill="none" stroke="#333" stroke-width="0.7"/><path d="M3,3 L13.4,3 L3,13" fill="none" stroke="#f5505c" stroke-width="0.65"/><circle cx="3" cy="3" r="1.0" fill="#e8232e"/><circle cx="13.4" cy="3" r="1.0" fill="#e8232e"/><circle cx="3" cy="13" r="1.0" fill="#e8232e"/></svg><svg class="ic" style="left:19.0px;top:173.4px" width="15" height="15" viewBox="0 0 16 16"><path d="M4.6,12.8 Q0.4,7.4 5.4,3.6 Q9.6,1 13.4,4.4" fill="none" stroke="#333" stroke-width="0.7"/><path d="M4.6,12.8 L13.4,4.4 M4.2,5 L9.4,8.4" fill="none" stroke="#f5505c" stroke-width="0.65"/><circle cx="4.6" cy="12.8" r="1.0" fill="#e8232e"/><circle cx="13.4" cy="4.4" r="1.0" fill="#e8232e"/><circle cx="4.2" cy="4.8" r="1.0" fill="#e8232e"/></svg><svg class="ic" style="left:2.1px;top:190.2px" width="15" height="15" viewBox="0 0 16 16"><path d="M5.6,2.6 Q13.2,2.2 13.6,8.4 Q13.4,13 8,13.6 Q4.4,13.6 2.8,10.8" fill="none" stroke="#333" stroke-width="0.7"/><path d="M5.6,2.6 L10.6,12.8 L2.8,10.4" fill="none" stroke="#f5505c" stroke-width="0.65"/><circle cx="5.6" cy="2.6" r="1.0" fill="#e8232e"/><circle cx="10.6" cy="12.8" r="1.0" fill="#e8232e"/><circle cx="2.8" cy="10.4" r="1.0" fill="#e8232e"/></svg><svg class="ic" style="left:19.0px;top:190.2px" width="15" height="15" viewBox="0 0 16 16"><path d="M3,3 L13.2,3 Q13.4,11.4 3,13.2 Z" fill="#a29e8a" stroke="#6f6c5c" stroke-width="0.5"/><path d="M3,3 H13.2 M3,3 V13.2 M3,13.2 L13.2,3" fill="none" stroke="#f5505c" stroke-width="0.6"/><circle cx="3" cy="3" r="0.9" fill="#e8232e"/><circle cx="13.2" cy="3" r="0.9" fill="#e8232e"/><circle cx="3" cy="13.2" r="0.9" fill="#e8232e"/></svg><svg class="ic" style="left:2.1px;top:211.8px" width="15" height="15" viewBox="0 0 16 16"><path d="M8,2 L10.3,5 H8.8 V7.2 H11 V5.7 L14,8 L11,10.3 V8.8 H8.8 V11 H10.3 L8,14 L5.7,11 H7.2 V8.8 H5 V10.3 L2,8 L5,5.7 V7.2 H7.2 V5 H5.7 Z" fill="#e8232e" stroke="#a01018" stroke-width="0.3"/><circle cx="8" cy="8" r="0.8" fill="#d0d0d0"/></svg><svg class="ic" style="left:19.0px;top:211.8px" width="15" height="15" viewBox="0 0 16 16"><path d="M1.4,10 L8.2,7.4 L14.8,9.8 L7.6,12.8 Z" fill="#a29e8a" stroke="#3a3a32" stroke-width="0.45"/><path d="M1.4,10 L7.6,12.8 V14.6 L1.4,11.6 Z" fill="#4c4a3e"/><path d="M7.6,12.8 L14.8,9.8 V11.4 L7.6,14.6 Z" fill="#6e6c5c"/><path d="M8.2,2.4 L10.4,5.4 H9 V9.6 H7.4 V5.4 H6 Z" fill="#e8232e" stroke="#9a1018" stroke-width="0.3"/></svg><svg class="ic" style="left:2.1px;top:228.5px" width="15" height="15" viewBox="0 0 16 16"><path d="M3.5,7.2 A4.6,4.6 0 0 1 11.4,4.9" fill="none" stroke="#e8232e" stroke-width="1.9"/><path d="M9.6,6.6 L13.6,6.8 L13.2,2.6 Z" fill="#e8232e"/><path d="M12.5,8.8 A4.6,4.6 0 0 1 4.6,11.1" fill="none" stroke="#e8232e" stroke-width="1.9"/><path d="M6.4,9.4 L2.4,9.2 L2.8,13.4 Z" fill="#e8232e"/></svg><svg class="ic" style="left:19.0px;top:228.5px" width="15" height="15" viewBox="0 0 16 16"><path d="M2.2,12.4 Q1.4,4.6 8.2,2.6 Q12.6,2 14.4,5.4 L13.6,8.6 Q11.6,5.6 8.6,6.4 Q5.8,7.6 6.4,13 Q4,14.4 2.2,12.4 Z" fill="#45453f" stroke="#1a1a1a" stroke-width="0.4"/><path d="M3.6,11.6 Q3.4,6 8.2,4.4 Q11.4,3.8 13,5.6" fill="none" stroke="#8a8a80" stroke-width="0.9"/><path d="M13,6.6 Q9,6.4 8.2,9.4 Q8.2,10.8 9.6,11" fill="none" stroke="#e8232e" stroke-width="1.7"/><path d="M9,8.8 L12.6,11 L9,13.2 Z" fill="#e8232e"/></svg><svg class="ic" style="left:2.1px;top:245.7px" width="15" height="15" viewBox="0 0 16 16"><rect x="2.4" y="2.4" width="11.4" height="11.4" fill="none" stroke="#f08088" stroke-width="0.6"/><rect x="2.4" y="6.2" width="7.6" height="7.6" fill="#a29e8a" stroke="#55534a" stroke-width="0.5"/><path d="M7.4,9 L11,5.4 L9.8,4.2 L14,2.2 L12,6.4 L10.8,5.2 L8.2,9.8 Z" fill="#e8232e"/><path d="M7.6,8.8 L12,4.4" stroke="#e8232e" stroke-width="1.6"/><path d="M9.6,2.4 H13.8 V6.6 Z" fill="#e8232e"/></svg><svg class="ic" style="left:19.0px;top:245.7px" width="15" height="15" viewBox="0 0 16 16"><path d="M2.6,5.4 Q8.4,1 13,5.8 Q15,9.4 13,13.6" fill="none" stroke="#e8232e" stroke-width="0.8"/><path d="M4.6,8.2 Q6.2,6.4 8,6.8 M10.6,9.8 Q11.2,11.6 10.4,13.4" fill="none" stroke="#333" stroke-width="0.7"/><path d="M5.6,10.4 L9,7.2 L8,6.2 L12,5.4 L11.2,9.4 L10.2,8.4 L6.8,11.6 Z" fill="#e8232e"/><path d="M6.2,11 L10.4,7" stroke="#e8232e" stroke-width="1.3"/><path d="M8.6,9.8 L9.6,13.6" stroke="#555" stroke-width="0.6"/></svg><svg class="ic" style="left:2.1px;top:266.1px" width="15" height="15" viewBox="0 0 16 16"><path d="M2.6,12.4 L7.6,7.6 L9.2,9.2 L4.2,14 Z" fill="#e8d018" stroke="#222" stroke-width="0.5"/><path d="M2.3,12.1 L4.5,14.3" stroke="#111" stroke-width="1.3"/><ellipse cx="10.2" cy="5.6" rx="4.6" ry="2.9" transform="rotate(-52 10.2 5.6)" fill="#3a3a30" stroke="#111" stroke-width="0.5"/><ellipse cx="10.3" cy="5.6" rx="3.3" ry="1.7" transform="rotate(-52 10.3 5.6)" fill="#f0e020" stroke="#6a6410" stroke-width="0.4"/></svg><svg class="ic" style="left:19.0px;top:266.1px" width="15" height="15" viewBox="0 0 16 16"><path d="M4.4,9.4 L9.8,4" stroke="#333" stroke-width="0.6"/><path d="M3,8 L5.8,10.8 M8.4,2.6 L11.2,5.4" stroke="#111" stroke-width="0.9"/><path d="M5,10 L8.6,13.6 M10.4,4.6 L13.8,8" stroke="#444" stroke-width="0.6"/><circle cx="13.8" cy="8" r="0.95" fill="#30c040"/><circle cx="8.8" cy="13.6" r="0.95" fill="#30c040"/><text x="3.6" y="5.4" font-size="4.4" font-family="Liberation Serif, serif" fill="#333">3</text></svg><svg class="ic" style="left:2.1px;top:282.9px" width="15" height="15" viewBox="0 0 16 16"><path d="M13.8,2.8 L5.6,13.8 Q1.8,12.4 2,8.6 Q3,2.8 13.8,2.8 Z" fill="#e6cc1c" stroke="#2a2a10" stroke-width="0.7" stroke-linejoin="round"/><path d="M10.6,5 L6,11.2 Q4.2,10.4 4.4,8.6 Q5,5.4 10.6,5 Z" fill="#e8e8e0" stroke="#4a4610" stroke-width="0.5"/><path d="M13.8,2.8 L5.6,13.8" stroke="#6a6410" stroke-width="0.9"/></svg><svg class="ic" style="left:19.0px;top:282.9px" width="15" height="15" viewBox="0 0 16 16"><rect x="6.2" y="2" width="8.2" height="6.4" fill="#fff" stroke="#555" stroke-width="0.5"/><text x="7" y="7.3" font-size="5.4" font-family="Liberation Serif, serif" fill="#111">A1</text><path d="M6.2,8.4 H4.2 V12.2" fill="none" stroke="#333" stroke-width="0.6"/><path d="M4.2,14.4 L3,11.6 H5.4 Z" fill="#111"/></svg><svg class="ic" style="left:2.1px;top:300.1px" width="15" height="15" viewBox="0 0 16 16"><path d="M8,3 V9" stroke="#a8c8f0" stroke-width="2.2"/><path d="M8,2.8 V9" stroke="#1a48d0" stroke-width="1.1"/><path d="M8,9 V13.6" stroke="#a8c8f0" stroke-width="1.6" opacity="0.7"/><path d="M8,9 L11.6,11.4" stroke="#d82020" stroke-width="1"/><path d="M12.8,12.2 L10.4,11.8 L11.6,10.2 Z" fill="#d82020"/><path d="M8,9 L11.6,6.4" stroke="#20a030" stroke-width="1"/><path d="M12.8,5.6 L11.6,7.6 L10.4,6 Z" fill="#20a030"/><path d="M8,9 L3.6,12" stroke="#20a030" stroke-width="0.5" stroke-dasharray="0.8 0.6"/><path d="M8,9 L3.6,6" stroke="#d82020" stroke-width="0.5" stroke-dasharray="0.8 0.6"/><circle cx="8" cy="9" r="0.9" fill="#222"/></svg><svg class="ic" style="left:19.0px;top:300.1px" width="15" height="15" viewBox="0 0 16 16"><path d="M5.2,12.4 L7.4,2.8 L10,2.4 L13,11 L13.8,12.8 L10.6,13.8 L9.8,11.2 L8,11.4 L7.6,13.4 Z" fill="#45443c" stroke="#1a1a18" stroke-width="0.4"/><path d="M5.2,12.4 L3.8,11.4 L6,3.2 L7.4,2.8 Z" fill="#7a7866"/><path d="M8.2,8.6 L9.4,8.4 L8.8,6 Z" fill="#d8d8cc"/><path d="M7.6,4.6 L8.8,4 L9.4,5.4 Z" fill="#8a8878"/><path d="M7.6,13.4 L13.8,12.8 L14.4,13.6 L8.2,14.6 Z" fill="#22221e"/></svg><svg class="ic" style="left:2.1px;top:321.2px" width="15" height="15" viewBox="0 0 16 16"><path d="M8,2.2 V14" stroke="#222" stroke-width="0.7"/><path d="M8,4.2 Q2.2,4.4 2.4,8 Q2.8,11.4 6.8,11.8 L6.8,13.6 L10,10.8 L6.8,8.2 L6.8,9.8 Q4.8,9.4 4.8,8 Q5,6.6 8,6.4 Z" fill="#d8202c" stroke="#7a1016" stroke-width="0.4"/><path d="M3.4,9.6 Q4.4,11.4 6.8,11.8 L6.8,13.6 L10,10.8 L8.6,9.8 Q6,10.6 3.4,9.6 Z" fill="#9a1420"/><path d="M8,2.6 L11.2,5 L8,7.4 V6 Q11,6.4 11.2,8 Q11,9.2 9.8,9.6 L11.4,11 Q13.8,10 13.6,8 Q13.2,4.8 8,4.2 Z" fill="#38b058" stroke="#0f5a22" stroke-width="0.4"/></svg><svg class="ic" style="left:19.0px;top:321.2px" width="15" height="15" viewBox="0 0 16 16"><g transform="rotate(28 8 8) translate(0.4 0.6) scale(0.92)"><path d="M3.4,9.2 Q2.2,7.6 3.6,6.6 L6.2,8 L6.6,3.8 Q7.6,2.6 8.4,3.8 L8.8,2.8 Q10,2 10.6,3.4 L11.2,3 Q12.6,2.8 12.6,4.4 Q14,4.4 13.8,6 L13.2,10 Q12.6,12.6 10.6,13.8 H6.4 Q4.8,11.6 3.4,9.2 Z" fill="#ecd4a4" stroke="#b09060" stroke-width="0.55"/><path d="M8.4,3.8 V7.4 M10.6,3.4 V7.4 M12.6,4.4 V7.8" stroke="#c0a070" stroke-width="0.45"/></g></svg><svg class="ic" style="left:2.1px;top:338.7px" width="15" height="15" viewBox="0 0 16 16"><path d="M2.4,13.8 L7,9.2" stroke="#222" stroke-width="1.7" stroke-linecap="round"/><circle cx="9.8" cy="6" r="3.8" fill="#8fbce8" stroke="#4a5a6c" stroke-width="0.8"/><path d="M7.2,5.4 Q8,3.6 10,3.6" fill="none" stroke="#dff0ff" stroke-width="0.8"/></svg><svg class="ic" style="left:19.0px;top:338.7px" width="15" height="15" viewBox="0 0 16 16"><rect x="2.4" y="2.4" width="11.4" height="11.4" fill="none" stroke="#f02834" stroke-width="0.95"/><path d="M2.4,13.8 L7,9.2" stroke="#222" stroke-width="1.7" stroke-linecap="round"/><circle cx="9.8" cy="6" r="3.8" fill="#8fbce8" stroke="#4a5a6c" stroke-width="0.8"/><path d="M7.2,5.4 Q8,3.6 10,3.6" fill="none" stroke="#dff0ff" stroke-width="0.8"/></svg><svg class="ic" style="left:2.1px;top:355.6px" width="15" height="15" viewBox="0 0 16 16"><path d="M1.8,1.8 L6.2,3 L3,6.2 Z M14.2,1.8 L13,6.2 L9.8,3 Z M14.2,14.2 L9.8,13 L13,9.8 Z M5.4,9.2 L6.8,10.6 L3.6,12.6 Z" fill="#e8232e"/><path d="M12.4,3.6 L10,6 M3.6,3.6 L6,6 M12.4,12.4 L10,10" stroke="#444" stroke-width="0.8"/><path d="M2.2,13.8 L6,10" stroke="#222" stroke-width="1.6" stroke-linecap="round"/><circle cx="8" cy="8" r="3" fill="#8fbce8" stroke="#4a5a6c" stroke-width="0.7"/></svg><svg class="ic" style="left:19.0px;top:355.6px" width="15" height="15" viewBox="0 0 16 16"><circle cx="6.6" cy="6.4" r="3.8" fill="#9ac4ea" stroke="#555" stroke-width="0.7"/><path d="M8.8,9.4 L13.6,14" stroke="#222" stroke-width="1.7" stroke-linecap="round"/><path d="M2,6.6 L6,3 V5 Q11.4,4.6 12.8,9.8 Q10.6,7.4 6,8 V10 Z" fill="#2a78d8" stroke="#124a9a" stroke-width="0.4"/></svg><svg class="ic" style="left:2.1px;top:375.9px" width="15" height="15" viewBox="0 0 16 16"><path d="M5.4,11.8 L10.6,14.6 M10.6,11.8 L5.4,14.6" stroke="#e8232e" stroke-width="0.7"/><path d="M8,1.6 Q9.2,2 8.8,3.6 Q10.4,6.8 9.4,9.8 L9,13 H7 L6.6,9.8 Q5.6,6.8 7.2,3.6 Q6.8,2 8,1.6 Z" fill="#fff" stroke="#555" stroke-width="0.55"/></svg><svg class="ic" style="left:19.0px;top:375.9px" width="15" height="15" viewBox="0 0 16 16"><path d="M2.4,8.8 Q5,5.2 8.6,5.4 Q12,5.8 13.8,8.4 Q11.4,11.4 7.8,11.2 Q4.4,10.8 2.4,8.8 Z" fill="#f4f4f4" stroke="#333" stroke-width="0.5"/><circle cx="8.2" cy="8.2" r="2.4" fill="#606060"/><circle cx="8.2" cy="8.2" r="1.2" fill="#111"/><path d="M2.2,7 Q5.2,3.4 9,3.8 Q12.4,4.2 14,6.6" fill="none" stroke="#222" stroke-width="1"/><path d="M2.4,8.8 Q5,5.6 8.6,5.4 Q12,5.8 13.8,8.4" fill="none" stroke="#111" stroke-width="0.8"/><path d="M3.6,11 Q7.4,13 11.6,11.2" fill="none" stroke="#999" stroke-width="0.5"/></svg><svg class="ic" style="left:2.1px;top:392.8px" width="15" height="15" viewBox="0 0 16 16"><g transform="rotate(14 5 8)"><path d="M2.8,6 Q2.4,2.6 4.6,2.4 Q7,2.6 6.8,6 Q6.6,8.6 5.2,9 Q3.2,8.8 2.8,6 Z M3.6,10.2 Q5.8,9.8 6,11 Q6,13.2 4.8,13.4 Q3.4,13 3.6,10.2 Z" fill="#111"/></g><g transform="rotate(18 11 8) translate(6.6 0.6)"><path d="M2.8,6 Q2.4,2.6 4.6,2.4 Q7,2.6 6.8,6 Q6.6,8.6 5.2,9 Q3.2,8.8 2.8,6 Z M3.6,10.2 Q5.8,9.8 6,11 Q6,13.2 4.8,13.4 Q3.4,13 3.6,10.2 Z" fill="#111"/></g></svg><svg class="ic" style="left:19.0px;top:392.8px" width="15" height="15" viewBox="0 0 16 16"><circle cx="8" cy="8" r="4.2" fill="#fff" stroke="#333" stroke-width="0.6"/><path d="M2,8 H13" stroke="#111" stroke-width="1"/><path d="M8,2.6 V13.4" stroke="#333" stroke-width="0.5"/><path d="M8,1.6 L9.2,3.6 H6.8 Z M8,14.4 L6.8,12.4 H9.2 Z M14.6,8 L12.2,9.4 V6.6 Z" fill="#111"/></svg><svg class="ic" style="left:2.1px;top:414.5px" width="15" height="15" viewBox="0 0 16 16"><path d="M2,7 L8,3.4 L14.2,6.6 L12.6,11.4 L7.4,14 L2.8,11 Z" fill="#3a3a38" stroke="#111" stroke-width="0.4"/><ellipse cx="8.2" cy="7.4" rx="4.8" ry="3.6" fill="#d8202c" stroke="#7a1016" stroke-width="0.4" transform="rotate(-12 8.2 7.4)"/><path d="M6,6.6 L9.8,5.6 L10.6,6.4 L7,7.6 L10.2,8.4 L9.8,9.6 L6,8.8" fill="none" stroke="#fff" stroke-width="0.8"/></svg><svg class="ic" style="left:19.0px;top:414.5px" width="15" height="15" viewBox="0 0 16 16"><path d="M2,8 L8,5 L14.2,7.6 L12.6,11.8 L7.4,14.2 L2.8,11.6 Z" fill="#3a3a38" stroke="#111" stroke-width="0.4"/><path d="M3.4,6.4 L5.8,3.4 H10.6 L13,6.2 L8.2,11.2 Z" fill="#d8202c" stroke="#7a1016" stroke-width="0.4"/><path d="M3.4,6.4 H13 M5.8,3.4 L7,6.4 L8.2,11.2 L9.6,6.4 L10.6,3.4" fill="none" stroke="#f08a90" stroke-width="0.5"/></svg><svg class="ic" style="left:2.1px;top:431.1px" width="15" height="15" viewBox="0 0 16 16"><path d="M2.2,4 L8.6,2.2 L11.6,4.4 L10.4,10 L5,11.8 L2.6,9.6 Z" fill="#fff" stroke="#e8232e" stroke-width="0.7"/><path d="M3.6,5.4 L8,4.2 L9.6,5.2 L5.6,6.6 L9.2,7.6 L8.8,9.2 L4.2,8.2" fill="none" stroke="#e8232e" stroke-width="0.8"/><path d="M6,11 H10.4 V9 L14.6,12 L10.4,15 V13 H6 Z" fill="#2a7cd8" stroke="#0e3a7a" stroke-width="0.4"/></svg><svg class="ic" style="left:19.0px;top:431.1px" width="15" height="15" viewBox="0 0 16 16"><path d="M2.4,6.4 L5,3 H10.6 L13.2,6.2 L8,12.4 Z" fill="#d8202c" stroke="#7a1016" stroke-width="0.4"/><path d="M2.4,6.4 H13.2 M5,3 L6.4,6.4 L8,12.4 L9.4,6.4 L10.6,3" fill="none" stroke="#f08a90" stroke-width="0.5"/><circle cx="11.4" cy="11.8" r="2.4" fill="#8a1018" stroke="#4a080c" stroke-width="0.4"/><circle cx="11.4" cy="11.8" r="0.9" fill="#f0a0a4"/></svg><div class="hsep" style="left:2px;top:118.7px;width:32px"></div><div class="hsep" style="left:2px;top:208.0px;width:32px"></div><div class="hsep" style="left:2px;top:263.5px;width:32px"></div><div class="hsep" style="left:2px;top:318.3px;width:32px"></div><div class="hsep" style="left:2px;top:373.5px;width:32px"></div><div class="hsep" style="left:2px;top:411.3px;width:32px"></div>
<div id="status"><span class="v">数值</span><div style="position:absolute;left:148px;top:0;width:1px;height:14px;background:#d0d0d0"></div><div class="hdl" style="left:2px;top:2.5px;height:10px"></div></div>
<svg id="wm" viewBox="0 0 84 24"><text x="42" y="19.5" text-anchor="middle" font-family="Liberation Sans, sans-serif" font-weight="bold" font-size="17.5" fill="#fff" stroke="#000" stroke-width="2.0" stroke-linejoin="round" paint-order="stroke" textLength="76" lengthAdjust="spacingAndGlyphs">@Wefans</text></svg>
</body></html>
